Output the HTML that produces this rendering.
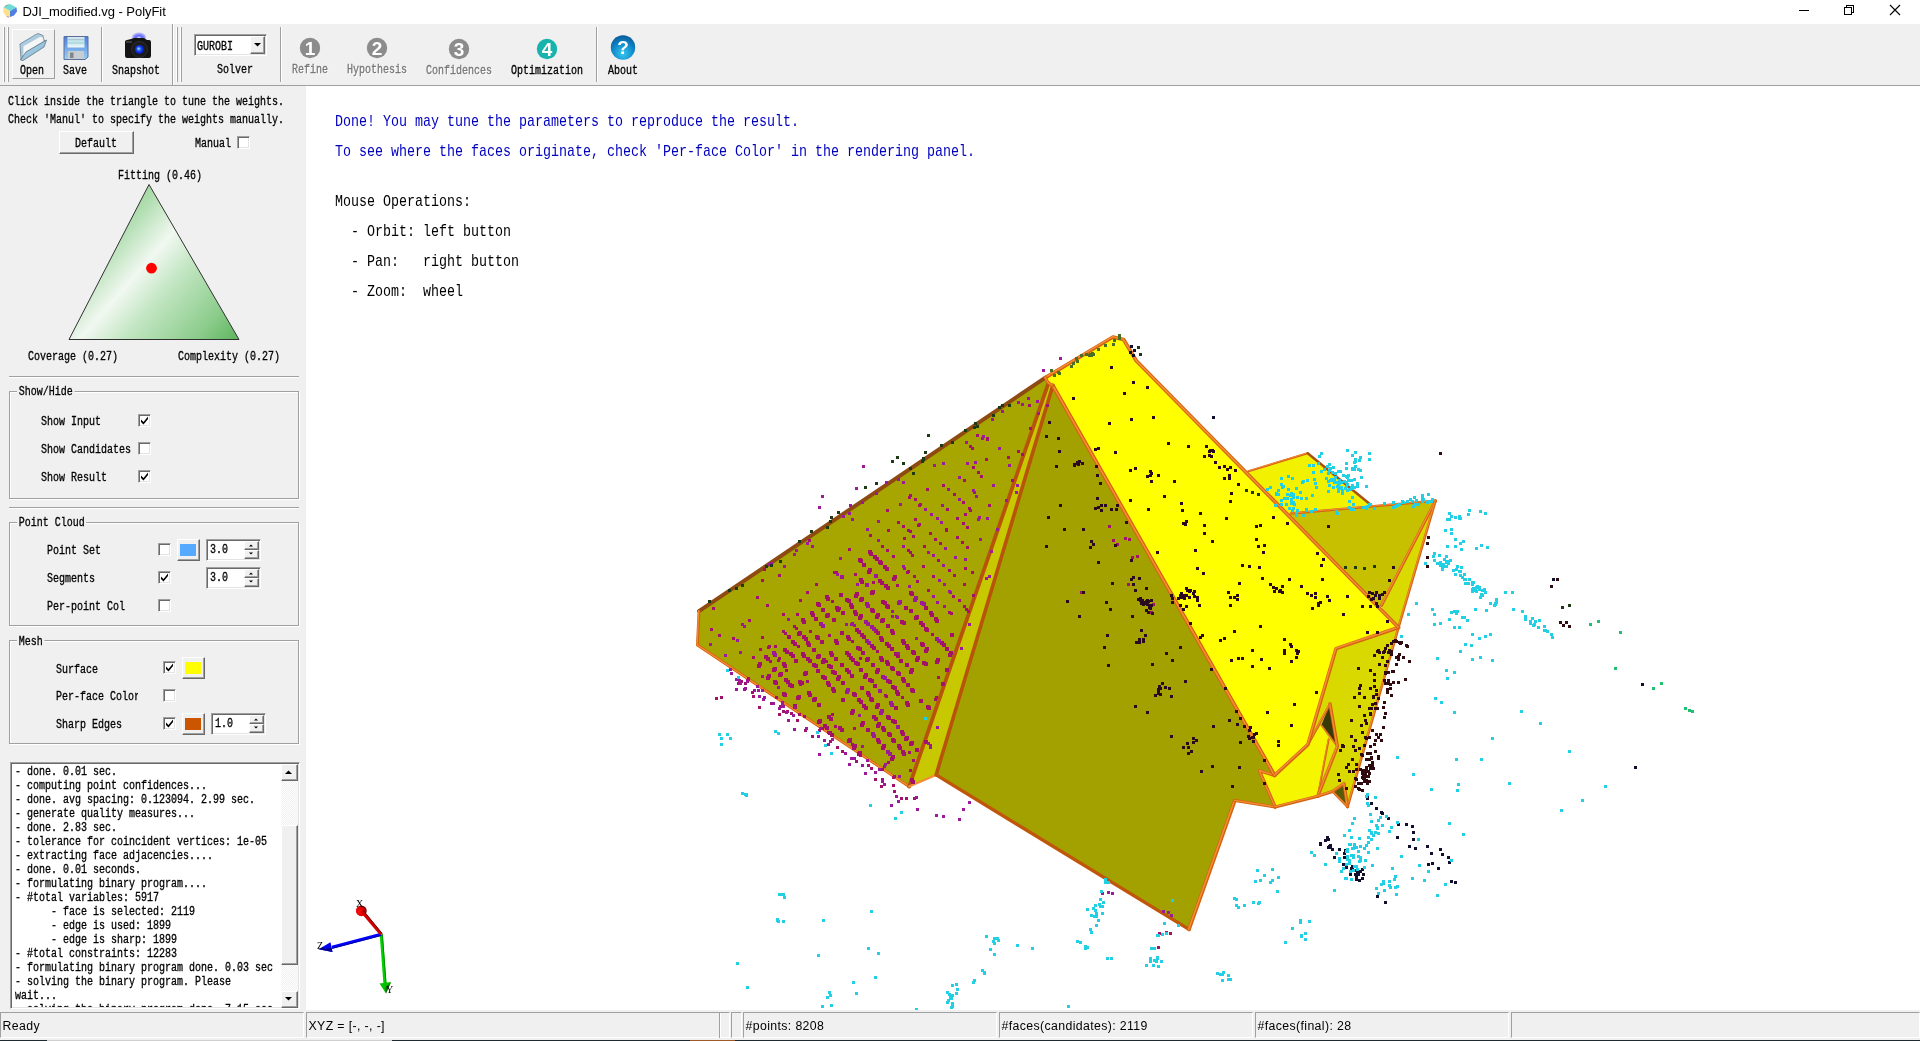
<!DOCTYPE html><html><head><meta charset="utf-8"><title>DJI_modified.vg - PolyFit</title><style>
html,body{margin:0;padding:0}
body{width:1920px;height:1041px;overflow:hidden;background:#f0f0f0;position:relative;font-family:"Liberation Mono",monospace;font-size:12px;color:#000}
#w{position:absolute;left:0;top:0;width:1920px;height:1041px;will-change:transform}
.a{position:absolute}
.t{position:absolute;white-space:pre;font:12px/14px "Liberation Mono",monospace;transform:scaleX(.8333);transform-origin:0 0;color:#000;-webkit-text-stroke:.3px}
.t16{position:absolute;white-space:pre;font:17px/20px "Liberation Mono",monospace;transform:scaleX(.7843);transform-origin:0 0;color:#000}
.dis{color:#787878;text-shadow:1.2px 1px 0 #fff}
.ui{position:absolute;white-space:pre;font:12px/16px "Liberation Sans",sans-serif;color:#000}
.raised{position:absolute;box-sizing:border-box;background:#f0f0f0;border:1px solid;border-color:#fff #696969 #696969 #fff;box-shadow:inset -1px -1px 0 #a0a0a0,inset 1px 1px 0 #f0f0f0}
.sunken{position:absolute;box-sizing:border-box;background:#fff;border:1px solid;border-color:#a0a0a0 #fff #fff #a0a0a0;box-shadow:inset 1px 1px 0 #696969,inset -1px -1px 0 #e3e3e3}
.grp{position:absolute;box-sizing:border-box;border:1px solid #a0a0a0;box-shadow:1px 1px 0 #fff,inset 1px 1px 0 #fff}
.grpt{background:#f0f0f0;padding:0 2px}
.hline{position:absolute;height:1px;background:#a0a0a0;box-shadow:0 1px 0 #fff}
.vsep{position:absolute;width:1px;background:#a0a0a0;box-shadow:1px 0 0 #fff}
.sbp{position:absolute;box-sizing:border-box;top:1012px;height:26px;border:1px solid;border-color:#a0a0a0 #fff #fff #a0a0a0}
</style></head><body><div id="w"><div class="a" style="left:0px;top:0px;width:1920px;height:24px;background:#fff;"></div><svg class="a" style="left:2px;top:3px" width="17" height="15" viewBox="0 0 17 15"><path d="M8 1 L14.5 4.5 L8 8 L1.5 4.5 Z" fill="#6fdcd8"/><path d="M1.5 4.5 L8 8 L8 14 L4 13 L1.2 9 Z" fill="#ffe08a"/><path d="M14.5 4.5 L8 8 L8 14 L12 12.5 L15 8.5 Z" fill="#4f7fe0"/><path d="M1.5 4.5 L4 2.3 L8 1 Z" fill="#4f8f5f"/><path d="M8 14 L4 13 L6 14.5 Z" fill="#d06060"/></svg><div class="ui" style="left:22.5px;top:3.5px;font-size:13px;line-height:16px;letter-spacing:-0.05px">DJI_modified.vg - PolyFit</div><svg class="a" style="left:1780px;top:0" width="140" height="24" viewBox="0 0 140 24" shape-rendering="crispEdges"><rect x="19" y="10" width="10" height="1" fill="#000"/><path d="M64.5 7.5 h7 v7 h-7 z M66.5 7.5 v-2 h7 v7 h-2" fill="none" stroke="#000" stroke-width="1"/><path d="M110 5 L120 15 M120 5 L110 15" fill="none" stroke="#000" stroke-width="1.1" shape-rendering="geometricPrecision"/></svg><div class="a" style="left:0px;top:85px;width:1920px;height:1px;background:#a0a0a0;"></div><div class="a" style="left:3px;top:27px;width:1px;height:55px;background:#fff;"></div><div class="a" style="left:4px;top:27px;width:1px;height:55px;background:#a0a0a0;"></div><div class="a" style="left:7px;top:27px;width:1px;height:55px;background:#fff;"></div><div class="a" style="left:8px;top:27px;width:1px;height:55px;background:#a0a0a0;"></div><div class="a" style="left:12px;top:29px;width:43px;height:50px;box-sizing:border-box;border:1px solid;border-color:#fff #a0a0a0 #a0a0a0 #fff"></div><svg class="a" style="left:18px;top:32px" width="30" height="31" viewBox="0 0 30 31"><defs><linearGradient id="fo" x1="0" y1="0" x2="1" y2="1"><stop offset="0" stop-color="#b8d8ea"/><stop offset="1" stop-color="#7fb4d4"/></linearGradient></defs><path d="M2 12 L17 3 L20 1.5 L25 3.5 L26 8 L27 9 L6 22 L3 28 Z" fill="#a9cde2" stroke="#6b7f8a" stroke-width="0.8"/><path d="M5 14 L22 4.5 L25 5 L25.5 9.5 L8 20 L5 26 Z" fill="#f4f6f8" stroke="#b0b8bf" stroke-width="0.6"/><path d="M8 20 L28.5 8 L26 15 L5 28.5 L2.5 28 Z" fill="url(#fo)" stroke="#5f7684" stroke-width="0.8"/></svg><div class="t" style="left:20px;top:64px;">Open</div><svg class="a" style="left:63px;top:35px" width="26" height="26" viewBox="0 0 26 26"><defs><linearGradient id="sv" x1="0" y1="0" x2="0" y2="1"><stop offset="0" stop-color="#4a7fe0"/><stop offset="1" stop-color="#9cd0f4"/></linearGradient><linearGradient id="sl" x1="0" y1="0" x2="0" y2="1"><stop offset="0" stop-color="#d8e4ee"/><stop offset=".5" stop-color="#bfe6ea"/><stop offset="1" stop-color="#f4f8fb"/></linearGradient></defs><path d="M1 1.5 H25 V22 L22 24.5 H1 Z" fill="url(#sv)" stroke="#5a6f9a" stroke-width="1"/><rect x="4.5" y="2" width="17" height="10.5" fill="url(#sl)"/><rect x="4.5" y="4" width="17" height="1.2" fill="#8fb0c8" opacity=".6"/><rect x="4.5" y="7.5" width="17" height="1.2" fill="#8fc8d0" opacity=".6"/><rect x="5" y="16" width="16" height="8" fill="#c8cdd2"/><rect x="7" y="17.5" width="3.5" height="5.5" fill="#7f858c"/></svg><div class="t" style="left:63px;top:64px;">Save</div><div class="vsep" style="left:101px;top:27px;height:55px"></div><svg class="a" style="left:123px;top:32px" width="30" height="29" viewBox="0 0 30 29"><defs><radialGradient id="fl" cx=".5" cy=".6" r=".6"><stop offset="0" stop-color="#fff"/><stop offset=".35" stop-color="#5a6aff"/><stop offset="1" stop-color="#2222ff" stop-opacity="0"/></radialGradient><radialGradient id="ln" cx=".45" cy=".45" r=".6"><stop offset="0" stop-color="#4aa0ff"/><stop offset=".6" stop-color="#1030e0"/><stop offset="1" stop-color="#0a1080"/></radialGradient></defs><ellipse cx="16" cy="5" rx="7" ry="5" fill="url(#fl)"/><path d="M2 9.5 Q2 8 4 8 L8 7 L11 6 H21 L24 8 H26 Q28 8 28 10 V24 Q28 26 26 26 H4 Q2 26 2 24 Z" fill="#141414"/><path d="M3 9 H9 V11 H3 Z" fill="#3a3a3a"/><circle cx="16.5" cy="17.5" r="8" fill="#1c1c1c" stroke="#333" stroke-width="0.8"/><circle cx="16.5" cy="17.5" r="4.6" fill="url(#ln)"/><circle cx="15.6" cy="16.6" r="1.2" fill="#7fd0ff"/></svg><div class="t" style="left:112px;top:64px;">Snapshot</div><div class="a" style="left:172px;top:24px;width:1px;height:61px;background:#a0a0a0;"></div><div class="a" style="left:173px;top:24px;width:1px;height:61px;background:#fff;"></div><div class="a" style="left:176px;top:27px;width:1px;height:55px;background:#fff;"></div><div class="a" style="left:177px;top:27px;width:1px;height:55px;background:#a0a0a0;"></div><div class="a" style="left:180px;top:27px;width:1px;height:55px;background:#fff;"></div><div class="a" style="left:181px;top:27px;width:1px;height:55px;background:#a0a0a0;"></div><div class="sunken" style="left:194px;top:34px;width:73px;height:22px;"></div><div class="t" style="left:197px;top:40px;">GUROBI</div><div class="raised" style="left:250px;top:36px;width:15px;height:18px;"></div><svg class="a" style="left:250px;top:36px" width="15" height="18" viewBox="0 0 15 18"><path d="M4 7 L11 7 L7.5 10.5 Z" fill="#000"/></svg><div class="t" style="left:217px;top:63px;">Solver</div><div class="vsep" style="left:280px;top:27px;height:55px"></div><svg class="a" style="left:297px;top:34.5px" width="26" height="26" viewBox="-13 -13 26 26"><circle cx="0" cy="0" r="10.2" fill="#8c8c8c"/><text x="0" y="6.8" text-anchor="middle" font-family="Liberation Sans, sans-serif" font-weight="bold" font-size="19" fill="#fff">1</text></svg><div class="t dis" style="left:291.5px;top:63px;">Refine</div><svg class="a" style="left:364px;top:34.5px" width="26" height="26" viewBox="-13 -13 26 26"><circle cx="0" cy="0" r="10.2" fill="#8c8c8c"/><text x="0" y="6.8" text-anchor="middle" font-family="Liberation Sans, sans-serif" font-weight="bold" font-size="19" fill="#fff">2</text></svg><div class="t dis" style="left:346.5px;top:63px;">Hypothesis</div><svg class="a" style="left:445.5px;top:35.5px" width="26" height="26" viewBox="-13 -13 26 26"><circle cx="0" cy="0" r="10.2" fill="#8c8c8c"/><text x="0" y="6.8" text-anchor="middle" font-family="Liberation Sans, sans-serif" font-weight="bold" font-size="19" fill="#fff">3</text></svg><div class="t dis" style="left:425.5px;top:64px;">Confidences</div><svg class="a" style="left:534px;top:35.5px" width="26" height="26" viewBox="-13 -13 26 26"><circle cx="0" cy="0" r="10.2" fill="#16b4ac"/><text x="0" y="6.8" text-anchor="middle" font-family="Liberation Sans, sans-serif" font-weight="bold" font-size="19" fill="#fff">4</text></svg><div class="t" style="left:511px;top:64px;">Optimization</div><div class="vsep" style="left:596px;top:27px;height:55px"></div><svg class="a" style="left:609px;top:33px" width="28" height="28" viewBox="-14 -14 28 28"><defs><radialGradient id="ab" cx=".5" cy=".75" r=".75"><stop offset="0" stop-color="#35c8f0"/><stop offset=".6" stop-color="#0f86c8"/><stop offset="1" stop-color="#0a5a98"/></radialGradient></defs><circle cx="0" cy="0.5" r="12.2" fill="url(#ab)"/><text x="0" y="6.5" text-anchor="middle" font-family="Liberation Sans, sans-serif" font-weight="bold" font-size="19" fill="#fff">?</text></svg><div class="t" style="left:608px;top:64px;">About</div><div class="t" style="left:8px;top:95px;">Click inside the triangle to tune the weights.</div><div class="t" style="left:8px;top:113px;">Check &#x27;Manul&#x27; to specify the weights manually.</div><div class="raised" style="left:59px;top:131px;width:75px;height:23px;"></div><div class="t" style="left:75px;top:137px;">Default</div><div class="t" style="left:195px;top:137px;">Manual</div><div class="sunken" style="left:237px;top:136px;width:13px;height:13px;"></div><div class="t" style="left:118px;top:169px;">Fitting (0.46)</div><svg class="a" style="left:60px;top:180px" width="190" height="166" viewBox="60 180 190 166"><defs><linearGradient id="tg" gradientUnits="userSpaceOnUse" x1="95" y1="225" x2="240" y2="352"><stop offset="0" stop-color="#8fd08f"/><stop offset=".14" stop-color="#b4dfb4"/><stop offset=".33" stop-color="#f1f8f1"/><stop offset=".50" stop-color="#c3e6c3"/><stop offset=".78" stop-color="#8ccc8c"/><stop offset="1" stop-color="#4fae4f"/></linearGradient></defs><path d="M149 184.5 L239 339.5 L69 339.5 Z" fill="url(#tg)" stroke="#303030" stroke-width="1"/><circle cx="151.5" cy="268.2" r="5.4" fill="#ff0000"/></svg><div class="t" style="left:28px;top:350px;">Coverage (0.27)</div><div class="t" style="left:178px;top:350px;">Complexity (0.27)</div><div class="hline" style="left:9px;top:376px;width:290px"></div><div class="grp" style="left:9px;top:391px;width:290px;height:108px"></div><div class="t grpt" style="left:17px;top:385px;">Show/Hide</div><div class="t" style="left:41px;top:414.5px;">Show Input</div><div class="sunken" style="left:138px;top:414px;width:13px;height:13px;"></div><svg class="a" style="left:138px;top:414px" width="13" height="13" viewBox="0 0 13 13"><path d="M3 5.5 L3 8 L5.5 10.5 L10 5 L10 2.5 L5.5 8 Z" fill="#000"/></svg><div class="t" style="left:41px;top:442.5px;">Show Candidates</div><div class="sunken" style="left:138px;top:442px;width:13px;height:13px;"></div><div class="t" style="left:41px;top:470.5px;">Show Result</div><div class="sunken" style="left:138px;top:470px;width:13px;height:13px;"></div><svg class="a" style="left:138px;top:470px" width="13" height="13" viewBox="0 0 13 13"><path d="M3 5.5 L3 8 L5.5 10.5 L10 5 L10 2.5 L5.5 8 Z" fill="#000"/></svg><div class="hline" style="left:9px;top:507px;width:290px"></div><div class="grp" style="left:9px;top:522px;width:290px;height:104px"></div><div class="t grpt" style="left:17px;top:516px;">Point Cloud</div><div class="t" style="left:46.5px;top:544px;">Point Set</div><div class="sunken" style="left:158px;top:543px;width:13px;height:13px;"></div><div class="raised" style="left:177px;top:539px;width:23px;height:22px;"></div><div class="a" style="left:180px;top:544px;width:16px;height:12px;background:#55aaff;"></div><div class="sunken" style="left:206px;top:539px;width:55px;height:22px;"></div><div class="t" style="left:210px;top:543px;">3.0</div><div class="raised" style="left:244px;top:541px;width:15px;height:9px;box-shadow:inset -1px -1px 0 #a0a0a0"></div><div class="raised" style="left:244px;top:550px;width:15px;height:9px;box-shadow:inset -1px -1px 0 #a0a0a0"></div><svg class="a" style="left:244px;top:541px" width="15" height="18" viewBox="0 0 15 18"><path d="M5 5.5 L9 5.5 L7 3.5 Z M5 11.5 L9 11.5 L7 13.5 Z" fill="#000"/></svg><div class="t" style="left:46.5px;top:572px;">Segments</div><div class="sunken" style="left:158px;top:571px;width:13px;height:13px;"></div><svg class="a" style="left:158px;top:571px" width="13" height="13" viewBox="0 0 13 13"><path d="M3 5.5 L3 8 L5.5 10.5 L10 5 L10 2.5 L5.5 8 Z" fill="#000"/></svg><div class="sunken" style="left:206px;top:567px;width:55px;height:22px;"></div><div class="t" style="left:210px;top:571px;">3.0</div><div class="raised" style="left:244px;top:569px;width:15px;height:9px;box-shadow:inset -1px -1px 0 #a0a0a0"></div><div class="raised" style="left:244px;top:578px;width:15px;height:9px;box-shadow:inset -1px -1px 0 #a0a0a0"></div><svg class="a" style="left:244px;top:569px" width="15" height="18" viewBox="0 0 15 18"><path d="M5 5.5 L9 5.5 L7 3.5 Z M5 11.5 L9 11.5 L7 13.5 Z" fill="#000"/></svg><div class="t" style="left:46.5px;top:600px;">Per-point Col</div><div class="sunken" style="left:158px;top:599px;width:13px;height:13px;"></div><div class="grp" style="left:9px;top:640px;width:290px;height:104px"></div><div class="t grpt" style="left:17px;top:634.5px;">Mesh</div><div class="t" style="left:55.5px;top:662.5px;">Surface</div><div class="sunken" style="left:163px;top:661px;width:13px;height:13px;"></div><svg class="a" style="left:163px;top:661px" width="13" height="13" viewBox="0 0 13 13"><path d="M3 5.5 L3 8 L5.5 10.5 L10 5 L10 2.5 L5.5 8 Z" fill="#000"/></svg><div class="raised" style="left:182px;top:657px;width:23px;height:22px;"></div><div class="a" style="left:185px;top:662px;width:16px;height:12px;background:#ffff00;"></div><div class="a" style="left:55.5px;top:690px;width:82px;height:14px;overflow:hidden"><div class="t" style="left:0;top:0">Per-face Color</div></div><div class="sunken" style="left:163px;top:689px;width:13px;height:13px;"></div><div class="t" style="left:55.5px;top:718px;">Sharp Edges</div><div class="sunken" style="left:163px;top:717px;width:13px;height:13px;"></div><svg class="a" style="left:163px;top:717px" width="13" height="13" viewBox="0 0 13 13"><path d="M3 5.5 L3 8 L5.5 10.5 L10 5 L10 2.5 L5.5 8 Z" fill="#000"/></svg><div class="raised" style="left:182px;top:713px;width:23px;height:22px;"></div><div class="a" style="left:185px;top:718px;width:16px;height:12px;background:#cc5500;"></div><div class="sunken" style="left:211px;top:713px;width:55px;height:22px;"></div><div class="t" style="left:215px;top:717px;">1.0</div><div class="raised" style="left:249px;top:715px;width:15px;height:9px;box-shadow:inset -1px -1px 0 #a0a0a0"></div><div class="raised" style="left:249px;top:724px;width:15px;height:9px;box-shadow:inset -1px -1px 0 #a0a0a0"></div><svg class="a" style="left:249px;top:715px" width="15" height="18" viewBox="0 0 15 18"><path d="M5 5.5 L9 5.5 L7 3.5 Z M5 11.5 L9 11.5 L7 13.5 Z" fill="#000"/></svg><div class="sunken" style="left:10px;top:762px;width:290px;height:247px;"></div><div class="a" style="left:12px;top:764px;width:268px;height:243px;overflow:hidden"><div class="t" style="left:2.5px;top:1.2px">- done. 0.01 sec.</div><div class="t" style="left:2.5px;top:15.2px">- computing point confidences...</div><div class="t" style="left:2.5px;top:29.2px">- done. avg spacing: 0.123094. 2.99 sec.</div><div class="t" style="left:2.5px;top:43.2px">- generate quality measures...</div><div class="t" style="left:2.5px;top:57.2px">- done. 2.83 sec.</div><div class="t" style="left:2.5px;top:71.2px">- tolerance for coincident vertices: 1e-05</div><div class="t" style="left:2.5px;top:85.2px">- extracting face adjacencies....</div><div class="t" style="left:2.5px;top:99.2px">- done. 0.01 seconds.</div><div class="t" style="left:2.5px;top:113.2px">- formulating binary program....</div><div class="t" style="left:2.5px;top:127.2px">- #total variables: 5917</div><div class="t" style="left:2.5px;top:141.2px">      - face is selected: 2119</div><div class="t" style="left:2.5px;top:155.2px">      - edge is used: 1899</div><div class="t" style="left:2.5px;top:169.2px">      - edge is sharp: 1899</div><div class="t" style="left:2.5px;top:183.2px">- #total constraints: 12283</div><div class="t" style="left:2.5px;top:197.2px">- formulating binary program done. 0.03 sec</div><div class="t" style="left:2.5px;top:211.2px">- solving the binary program. Please</div><div class="t" style="left:2.5px;top:225.2px">wait...</div><div class="t" style="left:2.5px;top:239.2px">- solving the binary program done. 7.15 sec</div></div><div class="a" style="left:281px;top:764px;width:17px;height:243px;background:#f8f8f8;background-image:conic-gradient(#fff 25%,#f0f0f0 0 50%,#fff 0 75%,#f0f0f0 0);background-size:2px 2px"></div><div class="raised" style="left:281px;top:764px;width:17px;height:17px;"></div><svg class="a" style="left:281px;top:764px" width="17" height="17" viewBox="0 0 17 17"><path d="M4 10 L11 10 L7.5 6.5 Z" fill="#000"/></svg><div class="raised" style="left:281px;top:825px;width:17px;height:140px;"></div><div class="raised" style="left:281px;top:991px;width:17px;height:17px;"></div><svg class="a" style="left:281px;top:991px" width="17" height="17" viewBox="0 0 17 17"><path d="M4 6 L11 6 L7.5 9.5 Z" fill="#000"/></svg><div class="a" style="left:306px;top:86px;width:1614px;height:924px;background:#fff;overflow:hidden"><svg class="a" style="left:0;top:0" width="1614" height="924" viewBox="306 86 1614 924"><defs><linearGradient id="eg" x1="0" y1="0" x2="1" y2="0"><stop offset="0" stop-color="#f08a3a"/><stop offset="1" stop-color="#b04a00"/></linearGradient></defs><polygon points="1240,475 1307.7,453.2 1371.0,505.0 1290.8,513.5 1280,520" fill="#f2f200"/><polygon points="1280,515 1435.5,500.8 1381.6,605.4 1370,610" fill="#c6c000"/><polygon points="1435.5,500.8 1398.5,627.5 1385,620 1381.6,605.4" fill="#dada00"/><polygon points="1045.4,377.6 699.0,611.2 697.4,645.0 909.1,786.6 1048.4,383.2" fill="#a7a500"/><polygon points="1048.4,383.2 909.1,786.6 936.1,774.9 1052.8,385.5" fill="#c8c800"/><polygon points="1052.8,385.5 936.1,774.9 1189.0,929.4 1234.8,800.6 1275.2,807.0 1259.5,770.8 1274.6,775.4" fill="#a3a100"/><polygon points="1336.1,648.6 1398.5,627.5 1347.6,806.8 1344.0,783.6 1332.5,791.5 1317.8,796.2 1337.4,746.5 1330.0,704.0 1307.9,744.6" fill="#d9d900"/><polygon points="1259.5,770.8 1274.6,775.4 1307.9,744.6 1321.3,725.0 1328.7,739.2 1317.8,796.2 1275.2,807.0" fill="#f6f600"/><polygon points="1321.3,725.0 1328.7,739.2 1317.8,796.2 1337.4,746.5" fill="#e4e400"/><polygon points="1307.9,744.6 1330.0,704.0 1321.3,725.0" fill="#d9d900"/><polygon points="1330.0,704.0 1321.3,725.0 1337.4,746.5" fill="#3a3a08"/><polygon points="1332.5,791.5 1344.0,783.6 1347.6,806.8" fill="#5a5a08"/><polygon points="1045.4,377.6 1113.0,337.0 1123.6,339.5 1136.3,360.7 1398.5,627.5 1336.1,648.6 1307.9,744.6 1274.6,775.4 1052.8,385.5" fill="#ffff00"/><polyline points="1248.5,471.2 1307.7,453.2" fill="none" stroke="#d2640f" stroke-width="2.2" stroke-linejoin="round" stroke-linecap="round"/><polyline points="1248.5,471.2 1307.7,453.2" fill="none" stroke="#f58c34" stroke-width="0.92" stroke-linejoin="round" stroke-linecap="round" transform="translate(-0.3,-0.3)"/><polyline points="1307.7,453.2 1371.0,505.0" fill="none" stroke="#a85010" stroke-width="2.4" stroke-linejoin="round" stroke-linecap="round"/><polyline points="1290.8,513.5 1435.5,500.8" fill="none" stroke="#d2640f" stroke-width="2.4" stroke-linejoin="round" stroke-linecap="round"/><polyline points="1290.8,513.5 1435.5,500.8" fill="none" stroke="#f58c34" stroke-width="1.01" stroke-linejoin="round" stroke-linecap="round" transform="translate(-0.3,-0.3)"/><polyline points="1435.5,500.8 1381.6,605.4" fill="none" stroke="#d2640f" stroke-width="3.0" stroke-linejoin="round" stroke-linecap="round"/><polyline points="1435.5,500.8 1381.6,605.4" fill="none" stroke="#f58c34" stroke-width="1.26" stroke-linejoin="round" stroke-linecap="round" transform="translate(-0.3,-0.3)"/><polyline points="1435.5,500.8 1398.5,627.5 1347.6,806.8" fill="none" stroke="#d2640f" stroke-width="2.6" stroke-linejoin="round" stroke-linecap="round"/><polyline points="1435.5,500.8 1398.5,627.5 1347.6,806.8" fill="none" stroke="#f58c34" stroke-width="1.09" stroke-linejoin="round" stroke-linecap="round" transform="translate(-0.3,-0.3)"/><polyline points="699.0,611.2 1045.4,377.6" fill="none" stroke="#8f4a12" stroke-width="4.0" stroke-linejoin="round" stroke-linecap="round"/><polyline points="699.0,611.2 697.4,645.0 909.1,786.6" fill="none" stroke="#d2640f" stroke-width="2.8" stroke-linejoin="round" stroke-linecap="round"/><polyline points="699.0,611.2 697.4,645.0 909.1,786.6" fill="none" stroke="#f58c34" stroke-width="1.18" stroke-linejoin="round" stroke-linecap="round" transform="translate(-0.3,-0.3)"/><polyline points="909.1,786.6 1048.4,383.2" fill="none" stroke="#b8540a" stroke-width="3.8" stroke-linejoin="round" stroke-linecap="round"/><polyline points="936.1,774.9 1052.8,385.5" fill="none" stroke="#b8540a" stroke-width="3.6" stroke-linejoin="round" stroke-linecap="round"/><polyline points="909.1,786.6 936.1,774.9" fill="none" stroke="#f0903a" stroke-width="2.2" stroke-linejoin="round" stroke-linecap="round"/><polyline points="909.1,786.6 936.1,774.9" fill="none" stroke="#f58c34" stroke-width="0.92" stroke-linejoin="round" stroke-linecap="round" transform="translate(-0.3,-0.3)"/><polyline points="936.1,774.9 1189.0,929.4" fill="none" stroke="#c0560a" stroke-width="3.4" stroke-linejoin="round" stroke-linecap="round"/><polyline points="1189.0,929.4 1234.8,800.6" fill="none" stroke="#d2640f" stroke-width="3.7" stroke-linejoin="round" stroke-linecap="round"/><polyline points="1189.0,929.4 1234.8,800.6" fill="none" stroke="#f58c34" stroke-width="1.55" stroke-linejoin="round" stroke-linecap="round" transform="translate(-0.3,-0.3)"/><polyline points="1234.8,800.6 1275.2,807.0" fill="none" stroke="#d2640f" stroke-width="3.0" stroke-linejoin="round" stroke-linecap="round"/><polyline points="1234.8,800.6 1275.2,807.0" fill="none" stroke="#f58c34" stroke-width="1.26" stroke-linejoin="round" stroke-linecap="round" transform="translate(-0.3,-0.3)"/><polyline points="1275.2,807.0 1259.5,770.8 1274.6,775.4" fill="none" stroke="#d2640f" stroke-width="3.2" stroke-linejoin="round" stroke-linecap="round"/><polyline points="1275.2,807.0 1259.5,770.8 1274.6,775.4" fill="none" stroke="#f58c34" stroke-width="1.34" stroke-linejoin="round" stroke-linecap="round" transform="translate(-0.3,-0.3)"/><polyline points="1307.9,744.6 1330.0,704.0" fill="none" stroke="#d2640f" stroke-width="2.6" stroke-linejoin="round" stroke-linecap="round"/><polyline points="1307.9,744.6 1330.0,704.0" fill="none" stroke="#f58c34" stroke-width="1.09" stroke-linejoin="round" stroke-linecap="round" transform="translate(-0.3,-0.3)"/><polyline points="1321.3,725.0 1337.4,746.5" fill="none" stroke="#d2640f" stroke-width="1.8" stroke-linejoin="round" stroke-linecap="round"/><polyline points="1321.3,725.0 1337.4,746.5" fill="none" stroke="#f58c34" stroke-width="0.76" stroke-linejoin="round" stroke-linecap="round" transform="translate(-0.3,-0.3)"/><polyline points="1328.7,739.2 1317.8,796.2" fill="none" stroke="#d2640f" stroke-width="2.0" stroke-linejoin="round" stroke-linecap="round"/><polyline points="1328.7,739.2 1317.8,796.2" fill="none" stroke="#f58c34" stroke-width="0.84" stroke-linejoin="round" stroke-linecap="round" transform="translate(-0.3,-0.3)"/><polyline points="1330.0,704.0 1337.4,746.5 1317.8,796.2" fill="none" stroke="#d2640f" stroke-width="3.4" stroke-linejoin="round" stroke-linecap="round"/><polyline points="1330.0,704.0 1337.4,746.5 1317.8,796.2" fill="none" stroke="#f58c34" stroke-width="1.43" stroke-linejoin="round" stroke-linecap="round" transform="translate(-0.3,-0.3)"/><polyline points="1275.2,807.0 1317.8,796.2 1332.5,791.5 1344.0,783.6 1347.6,806.8" fill="none" stroke="#d2640f" stroke-width="3.2" stroke-linejoin="round" stroke-linecap="round"/><polyline points="1275.2,807.0 1317.8,796.2 1332.5,791.5 1344.0,783.6 1347.6,806.8" fill="none" stroke="#f58c34" stroke-width="1.34" stroke-linejoin="round" stroke-linecap="round" transform="translate(-0.3,-0.3)"/><polyline points="1332.5,791.5 1347.6,806.8" fill="none" stroke="#d2640f" stroke-width="2.4" stroke-linejoin="round" stroke-linecap="round"/><polyline points="1332.5,791.5 1347.6,806.8" fill="none" stroke="#f58c34" stroke-width="1.01" stroke-linejoin="round" stroke-linecap="round" transform="translate(-0.3,-0.3)"/><polyline points="1052.8,385.5 1274.6,775.4" fill="none" stroke="#d2640f" stroke-width="3.9" stroke-linejoin="round" stroke-linecap="round"/><polyline points="1052.8,385.5 1274.6,775.4" fill="none" stroke="#f58c34" stroke-width="1.64" stroke-linejoin="round" stroke-linecap="round" transform="translate(-0.3,-0.3)"/><polyline points="1398.5,627.5 1336.1,648.6 1307.9,744.6 1274.6,775.4" fill="none" stroke="#d2640f" stroke-width="3.5" stroke-linejoin="round" stroke-linecap="round"/><polyline points="1398.5,627.5 1336.1,648.6 1307.9,744.6 1274.6,775.4" fill="none" stroke="#f58c34" stroke-width="1.47" stroke-linejoin="round" stroke-linecap="round" transform="translate(-0.3,-0.3)"/><polyline points="1045.4,377.6 1113.0,337.0 1123.6,339.5 1136.3,360.7 1398.5,627.5" fill="none" stroke="#d2640f" stroke-width="3.7" stroke-linejoin="round" stroke-linecap="round"/><polyline points="1045.4,377.6 1113.0,337.0 1123.6,339.5 1136.3,360.7 1398.5,627.5" fill="none" stroke="#f58c34" stroke-width="1.55" stroke-linejoin="round" stroke-linecap="round" transform="translate(-0.3,-0.3)"/><polyline points="1045.4,377.6 1048.4,383.2 1052.8,385.5" fill="none" stroke="#d2640f" stroke-width="3.0" stroke-linejoin="round" stroke-linecap="round"/><polyline points="1045.4,377.6 1048.4,383.2 1052.8,385.5" fill="none" stroke="#f58c34" stroke-width="1.26" stroke-linejoin="round" stroke-linecap="round" transform="translate(-0.3,-0.3)"/></svg><svg class="a" style="left:0;top:0" width="1614" height="924" viewBox="306 86 1614 924" shape-rendering="crispEdges"><path fill="#a3126a" d="M752 656h3v3h-3zM758 662h4v4h-4zM757 664h4v4h-4zM767 674h4v4h-4zM766 676h4v4h-4zM773 680h4v4h-4zM774 681h4v4h-4zM782 692h4v4h-4zM783 693h4v4h-4zM793 704h4v4h-4zM759 648h3v3h-3zM764 655h4v4h-4zM766 657h4v4h-4zM769 660h3v3h-3zM773 667h4v4h-4zM772 668h4v4h-4zM779 672h4v4h-4zM778 673h4v4h-4zM784 678h4v4h-4zM786 680h4v4h-4zM788 683h4v4h-4zM790 684h4v4h-4zM797 695h4v4h-4zM796 696h4v4h-4zM818 719h4v4h-4zM817 720h4v4h-4zM823 724h4v4h-4zM825 726h4v4h-4zM828 731h4v4h-4zM830 733h4v4h-4zM768 645h3v3h-3zM767 646h3v3h-3zM778 657h3v3h-3zM777 659h3v3h-3zM782 662h4v4h-4zM783 664h4v4h-4zM798 680h4v4h-4zM800 681h4v4h-4zM807 691h4v4h-4zM808 693h4v4h-4zM813 697h4v4h-4zM812 698h4v4h-4zM817 703h4v4h-4zM827 715h4v4h-4zM829 717h4v4h-4zM838 726h4v4h-4zM840 728h4v4h-4zM848 738h4v4h-4zM847 739h4v4h-4zM853 744h4v4h-4zM852 746h4v4h-4zM858 751h4v4h-4zM857 752h4v4h-4zM783 648h4v4h-4zM785 650h4v4h-4zM789 652h4v4h-4zM791 654h4v4h-4zM794 659h4v4h-4zM804 671h4v4h-4zM803 672h4v4h-4zM893 775h3v3h-3zM892 776h3v3h-3zM782 630h3v3h-3zM784 632h3v3h-3zM787 635h4v4h-4zM791 640h4v4h-4zM793 642h4v4h-4zM797 645h3v3h-3zM801 652h4v4h-4zM802 654h4v4h-4zM806 657h4v4h-4zM808 659h4v4h-4zM812 663h4v4h-4zM814 664h4v4h-4zM816 669h4v4h-4zM821 675h4v4h-4zM823 676h4v4h-4zM826 681h4v4h-4zM827 683h4v4h-4zM831 687h4v4h-4zM832 689h4v4h-4zM841 698h4v4h-4zM851 709h4v4h-4zM850 711h4v4h-4zM861 721h4v4h-4zM860 723h4v4h-4zM866 728h4v4h-4zM876 738h4v4h-4zM877 740h4v4h-4zM882 744h4v4h-4zM881 746h4v4h-4zM891 755h4v4h-4zM890 757h4v4h-4zM910 778h4v4h-4zM911 780h4v4h-4zM782 613h3v3h-3zM793 625h3v3h-3zM795 627h3v3h-3zM798 631h4v4h-4zM797 632h4v4h-4zM802 635h4v4h-4zM804 637h4v4h-4zM806 641h4v4h-4zM807 643h4v4h-4zM812 648h4v4h-4zM817 654h4v4h-4zM816 655h4v4h-4zM822 658h4v4h-4zM821 660h4v4h-4zM827 664h4v4h-4zM829 665h4v4h-4zM831 670h4v4h-4zM833 671h4v4h-4zM837 675h4v4h-4zM836 677h4v4h-4zM841 681h4v4h-4zM852 692h4v4h-4zM853 693h4v4h-4zM857 698h4v4h-4zM859 700h4v4h-4zM862 704h4v4h-4zM864 706h4v4h-4zM872 715h4v4h-4zM874 717h4v4h-4zM877 722h4v4h-4zM876 724h4v4h-4zM881 726h4v4h-4zM882 728h4v4h-4zM887 732h4v4h-4zM888 733h4v4h-4zM891 738h4v4h-4zM892 739h4v4h-4zM897 744h4v4h-4zM898 746h4v4h-4zM901 750h4v4h-4zM902 752h4v4h-4zM796 613h3v3h-3zM801 618h4v4h-4zM802 620h4v4h-4zM809 630h3v3h-3zM815 635h4v4h-4zM816 636h4v4h-4zM820 640h4v4h-4zM829 651h4v4h-4zM830 653h4v4h-4zM834 657h4v4h-4zM840 663h4v4h-4zM845 668h4v4h-4zM847 670h4v4h-4zM850 674h4v4h-4zM860 686h4v4h-4zM866 691h4v4h-4zM867 693h4v4h-4zM869 697h4v4h-4zM870 698h4v4h-4zM876 703h4v4h-4zM875 705h4v4h-4zM886 715h4v4h-4zM887 716h4v4h-4zM891 719h4v4h-4zM893 720h4v4h-4zM900 730h4v4h-4zM901 732h4v4h-4zM905 736h4v4h-4zM904 737h4v4h-4zM910 741h4v4h-4zM909 742h4v4h-4zM915 748h4v4h-4zM799 599h3v3h-3zM810 611h4v4h-4zM811 613h4v4h-4zM814 617h4v4h-4zM828 634h3v3h-3zM834 639h4v4h-4zM835 641h4v4h-4zM845 651h4v4h-4zM847 653h4v4h-4zM849 656h4v4h-4zM851 658h4v4h-4zM854 661h4v4h-4zM856 662h4v4h-4zM859 668h4v4h-4zM864 673h4v4h-4zM863 675h4v4h-4zM868 678h4v4h-4zM870 679h4v4h-4zM873 684h4v4h-4zM884 694h3v3h-3zM885 695h3v3h-3zM894 706h4v4h-4zM924 740h4v4h-4zM806 591h3v3h-3zM816 602h4v4h-4zM817 603h4v4h-4zM821 608h4v4h-4zM826 613h4v4h-4zM825 614h4v4h-4zM832 618h4v4h-4zM840 631h4v4h-4zM846 635h4v4h-4zM847 637h4v4h-4zM851 640h3v3h-3zM856 646h4v4h-4zM858 647h4v4h-4zM861 651h4v4h-4zM866 657h4v4h-4zM865 658h4v4h-4zM871 663h4v4h-4zM876 668h4v4h-4zM875 670h4v4h-4zM886 679h4v4h-4zM888 680h4v4h-4zM891 685h4v4h-4zM893 686h4v4h-4zM895 690h4v4h-4zM896 692h4v4h-4zM901 696h3v3h-3zM905 701h4v4h-4zM906 703h4v4h-4zM815 583h3v3h-3zM825 595h4v4h-4zM826 597h4v4h-4zM831 600h3v3h-3zM835 606h4v4h-4zM836 608h4v4h-4zM841 611h4v4h-4zM855 628h4v4h-4zM857 630h4v4h-4zM860 633h4v4h-4zM862 635h4v4h-4zM870 644h4v4h-4zM872 646h4v4h-4zM876 650h3v3h-3zM879 656h4v4h-4zM880 658h4v4h-4zM885 660h4v4h-4zM886 662h4v4h-4zM890 666h4v4h-4zM891 667h4v4h-4zM896 671h4v4h-4zM897 672h4v4h-4zM901 677h4v4h-4zM902 679h4v4h-4zM906 683h4v4h-4zM910 688h4v4h-4zM911 689h4v4h-4zM919 699h4v4h-4zM926 705h4v4h-4zM927 706h4v4h-4zM839 593h4v4h-4zM845 598h4v4h-4zM847 599h4v4h-4zM849 603h4v4h-4zM850 605h4v4h-4zM853 610h4v4h-4zM854 612h4v4h-4zM859 614h4v4h-4zM858 616h4v4h-4zM874 629h4v4h-4zM876 631h4v4h-4zM879 636h4v4h-4zM880 638h4v4h-4zM885 642h4v4h-4zM887 644h4v4h-4zM890 647h4v4h-4zM894 652h4v4h-4zM896 654h4v4h-4zM899 659h4v4h-4zM905 663h4v4h-4zM910 668h4v4h-4zM909 670h4v4h-4zM935 696h3v3h-3zM934 698h3v3h-3zM835 571h3v3h-3zM855 592h4v4h-4zM854 594h4v4h-4zM860 597h4v4h-4zM859 598h4v4h-4zM870 608h4v4h-4zM871 609h4v4h-4zM876 613h4v4h-4zM875 615h4v4h-4zM881 618h4v4h-4zM880 619h4v4h-4zM886 624h4v4h-4zM890 629h4v4h-4zM891 631h4v4h-4zM901 639h4v4h-4zM902 641h4v4h-4zM905 644h4v4h-4zM906 646h4v4h-4zM911 650h4v4h-4zM912 651h4v4h-4zM916 656h4v4h-4zM915 658h4v4h-4zM922 661h4v4h-4zM924 662h4v4h-4zM937 676h3v3h-3zM941 682h4v4h-4zM854 573h3v3h-3zM859 578h4v4h-4zM860 580h4v4h-4zM871 590h4v4h-4zM870 591h4v4h-4zM881 600h4v4h-4zM883 601h4v4h-4zM885 604h4v4h-4zM886 605h4v4h-4zM900 620h4v4h-4zM902 621h4v4h-4zM920 642h4v4h-4zM921 643h4v4h-4zM925 647h4v4h-4zM924 649h4v4h-4zM936 658h4v4h-4zM935 660h4v4h-4zM945 668h4v4h-4zM848 548h3v3h-3zM858 558h4v4h-4zM859 559h4v4h-4zM862 563h4v4h-4zM868 568h4v4h-4zM867 570h4v4h-4zM878 579h4v4h-4zM880 581h4v4h-4zM884 584h4v4h-4zM886 586h4v4h-4zM904 606h4v4h-4zM909 609h4v4h-4zM915 615h4v4h-4zM914 616h4v4h-4zM919 621h4v4h-4zM921 623h4v4h-4zM924 627h4v4h-4zM925 628h4v4h-4zM940 641h4v4h-4zM942 643h4v4h-4zM945 647h4v4h-4zM949 651h4v4h-4zM948 653h4v4h-4zM868 550h4v4h-4zM869 552h4v4h-4zM873 555h4v4h-4zM875 557h4v4h-4zM878 560h4v4h-4zM879 561h4v4h-4zM883 565h4v4h-4zM885 567h4v4h-4zM893 575h4v4h-4zM892 577h4v4h-4zM909 591h4v4h-4zM910 592h4v4h-4zM924 606h4v4h-4zM929 611h4v4h-4zM930 613h4v4h-4zM934 617h4v4h-4zM935 619h4v4h-4zM950 633h4v4h-4zM881 545h3v3h-3zM886 549h3v3h-3zM892 555h3v3h-3zM907 570h3v3h-3zM906 571h3v3h-3zM913 575h3v3h-3zM916 580h3v3h-3zM927 589h3v3h-3zM948 611h3v3h-3zM950 612h3v3h-3zM887 529h3v3h-3zM907 549h3v3h-3zM909 551h3v3h-3zM911 554h3v3h-3zM922 565h3v3h-3zM932 575h3v3h-3zM952 595h3v3h-3zM958 599h3v3h-3zM963 605h3v3h-3zM967 610h3v3h-3zM886 509h3v3h-3zM897 521h3v3h-3zM902 525h3v3h-3zM907 529h3v3h-3zM909 530h3v3h-3zM912 535h3v3h-3zM923 545h3v3h-3zM937 559h3v3h-3zM948 569h3v3h-3zM953 574h3v3h-3zM963 583h3v3h-3zM972 594h3v3h-3zM914 518h3v3h-3zM918 523h3v3h-3zM917 524h3v3h-3zM929 532h3v3h-3zM934 538h3v3h-3zM939 542h3v3h-3zM964 567h3v3h-3zM971 571h3v3h-3zM909 494h3v3h-3zM908 496h3v3h-3zM914 498h3v3h-3zM919 503h3v3h-3zM918 504h3v3h-3zM945 528h3v3h-3zM956 536h3v3h-3zM961 541h3v3h-3zM966 546h3v3h-3zM926 488h3v3h-3zM946 508h3v3h-3zM956 517h3v3h-3zM962 522h3v3h-3zM966 526h3v3h-3zM942 484h3v3h-3zM953 493h3v3h-3zM962 501h3v3h-3zM968 507h3v3h-3zM969 509h3v3h-3zM963 479h3v3h-3zM988 504h3v3h-3zM972 466h3v3h-3zM977 471h3v3h-3zM980 475h3v3h-3zM969 445h3v3h-3zM971 447h3v3h-3zM985 458h3v3h-3zM1011 479h3v3h-3zM986 438h3v3h-3zM1007 456h3v3h-3zM1029 427h3v3h-3zM1028 404h3v3h-3zM774 645h3v3h-3zM964 513h3v3h-3zM732 637h3v3h-3zM976 434h3v3h-3zM761 636h3v3h-3zM912 759h3v3h-3zM712 607h3v3h-3zM831 713h3v3h-3zM785 669h3v3h-3zM761 579h3v3h-3zM931 633h3v3h-3zM831 670h3v3h-3zM869 534h3v3h-3zM748 619h3v3h-3zM1017 450h3v3h-3zM872 581h3v3h-3zM965 608h3v3h-3zM763 568h3v3h-3zM986 437h3v3h-3zM908 751h3v3h-3zM756 596h3v3h-3zM896 584h3v3h-3zM833 571h3v3h-3zM710 628h3v3h-3zM903 537h3v3h-3zM887 761h3v3h-3zM945 529h3v3h-3zM799 683h3v3h-3zM1021 453h3v3h-3zM834 725h3v3h-3zM909 769h3v3h-3zM838 607h3v3h-3zM718 634h3v3h-3zM853 727h3v3h-3zM825 660h3v3h-3zM766 604h3v3h-3zM778 574h3v3h-3zM808 539h3v3h-3zM806 680h3v3h-3zM859 657h3v3h-3zM794 706h3v3h-3zM818 729h3v3h-3zM874 778h3v3h-3zM778 713h3v3h-3zM849 740h3v3h-3zM905 797h3v3h-3zM913 797h3v3h-3zM770 702h3v3h-3zM790 712h3v3h-3zM811 735h3v3h-3zM775 696h3v3h-3zM893 790h3v3h-3zM746 679h3v3h-3zM786 710h3v3h-3zM900 797h3v3h-3zM841 750h3v3h-3zM779 705h3v3h-3zM867 764h3v3h-3zM743 688h3v3h-3zM747 678h3v3h-3zM804 729h3v3h-3zM836 746h3v3h-3zM855 760h3v3h-3zM798 713h3v3h-3zM782 710h3v3h-3zM744 682h3v3h-3zM752 695h3v3h-3zM740 680h3v3h-3zM892 784h3v3h-3zM803 715h3v3h-3zM737 682h3v3h-3zM751 691h3v3h-3zM827 731h3v3h-3zM796 719h3v3h-3zM881 768h3v3h-3zM880 785h3v3h-3zM859 754h3v3h-3zM821 727h3v3h-3zM829 740h3v3h-3zM881 778h3v3h-3zM870 767h3v3h-3zM851 743h3v3h-3zM747 677h3v3h-3zM825 726h3v3h-3zM758 706h3v3h-3zM715 697h3v3h-3zM720 696h3v3h-3zM1108 525h3v3h-3zM1112 539h3v3h-3zM1116 543h3v3h-3zM1124 537h3v3h-3zM1128 538h3v3h-3zM1131 556h3v3h-3zM1136 555h3v3h-3zM1080 591h3v3h-3zM1127 583h3v3h-3zM1152 603h3v3h-3zM1150 611h3v3h-3zM1046 404h3v3h-3zM1158 932h3v3h-3zM1165 931h3v3h-3zM1169 932h3v3h-3zM1157 946h3v3h-3z"/><path fill="#9a1a9a" d="M777 686h3v3h-3zM772 651h4v4h-4zM773 653h4v4h-4zM884 763h3v3h-3zM883 765h3v3h-3zM871 732h4v4h-4zM872 734h4v4h-4zM886 750h4v4h-4zM888 752h4v4h-4zM787 618h3v3h-3zM846 688h4v4h-4zM845 690h4v4h-4zM880 709h4v4h-4zM879 711h4v4h-4zM896 725h4v4h-4zM819 622h4v4h-4zM821 624h4v4h-4zM878 689h4v4h-4zM889 701h4v4h-4zM890 703h4v4h-4zM881 675h4v4h-4zM883 676h4v4h-4zM851 622h3v3h-3zM850 623h3v3h-3zM865 639h4v4h-4zM867 641h4v4h-4zM864 620h4v4h-4zM866 622h4v4h-4zM870 625h4v4h-4zM872 627h4v4h-4zM840 575h4v4h-4zM865 602h4v4h-4zM866 604h4v4h-4zM839 557h3v3h-3zM865 583h4v4h-4zM891 610h3v3h-3zM895 615h3v3h-3zM896 616h3v3h-3zM915 637h3v3h-3zM874 574h4v4h-4zM898 600h4v4h-4zM897 601h4v4h-4zM935 637h4v4h-4zM937 639h4v4h-4zM914 596h4v4h-4zM913 598h4v4h-4zM920 601h4v4h-4zM922 602h4v4h-4zM866 528h3v3h-3zM877 539h3v3h-3zM902 565h3v3h-3zM903 567h3v3h-3zM932 595h3v3h-3zM943 605h3v3h-3zM877 520h3v3h-3zM902 545h3v3h-3zM938 579h3v3h-3zM943 583h3v3h-3zM948 590h3v3h-3zM949 591h3v3h-3zM927 551h3v3h-3zM932 554h3v3h-3zM942 564h3v3h-3zM899 503h3v3h-3zM944 547h3v3h-3zM954 556h3v3h-3zM924 508h3v3h-3zM930 513h3v3h-3zM936 517h3v3h-3zM940 521h3v3h-3zM941 504h3v3h-3zM947 488h3v3h-3zM958 498h3v3h-3zM978 516h3v3h-3zM977 518h3v3h-3zM942 462h3v3h-3zM958 476h3v3h-3zM972 489h3v3h-3zM973 491h3v3h-3zM966 462h3v3h-3zM992 484h3v3h-3zM982 435h3v3h-3zM981 437h3v3h-3zM998 447h3v3h-3zM761 675h3v3h-3zM897 652h3v3h-3zM1036 400h3v3h-3zM858 714h3v3h-3zM936 601h3v3h-3zM736 639h3v3h-3zM741 623h3v3h-3zM986 517h3v3h-3zM739 651h3v3h-3zM891 615h3v3h-3zM908 585h3v3h-3zM743 625h3v3h-3zM975 495h3v3h-3zM856 583h3v3h-3zM979 538h3v3h-3zM836 573h3v3h-3zM724 654h3v3h-3zM845 623h3v3h-3zM964 558h3v3h-3zM1008 464h3v3h-3zM933 464h3v3h-3zM853 624h3v3h-3zM709 643h3v3h-3zM861 745h3v3h-3zM974 461h3v3h-3zM770 562h3v3h-3zM842 515h3v3h-3zM1017 401h3v3h-3zM783 565h3v3h-3zM1021 403h3v3h-3zM848 512h3v3h-3zM965 441h3v3h-3zM768 563h3v3h-3zM902 481h3v3h-3zM1027 397h3v3h-3zM1001 410h3v3h-3zM851 518h3v3h-3zM806 542h3v3h-3zM849 504h3v3h-3zM875 492h3v3h-3zM885 481h3v3h-3zM793 553h3v3h-3zM991 418h3v3h-3zM897 478h3v3h-3zM861 501h3v3h-3zM811 545h3v3h-3zM795 549h3v3h-3zM862 465h3v3h-3zM821 495h3v3h-3zM818 506h3v3h-3zM855 487h3v3h-3zM1059 357h3v3h-3zM1042 369h3v3h-3zM781 701h3v3h-3zM823 739h3v3h-3zM772 702h3v3h-3zM878 768h3v3h-3zM864 772h3v3h-3zM738 679h3v3h-3zM881 780h3v3h-3zM861 764h3v3h-3zM831 738h3v3h-3zM819 727h3v3h-3zM761 689h3v3h-3zM844 752h3v3h-3zM739 682h3v3h-3zM817 735h3v3h-3zM818 753h3v3h-3zM874 771h3v3h-3zM787 719h3v3h-3zM895 795h3v3h-3zM753 689h3v3h-3zM898 775h3v3h-3zM758 695h3v3h-3zM762 698h3v3h-3zM883 783h3v3h-3zM746 680h3v3h-3zM785 711h3v3h-3zM848 763h3v3h-3zM866 759h3v3h-3zM805 727h3v3h-3zM793 706h3v3h-3zM850 757h3v3h-3zM782 705h3v3h-3zM730 672h3v3h-3zM792 714h3v3h-3zM735 678h3v3h-3zM793 728h3v3h-3zM729 668h3v3h-3zM781 704h3v3h-3zM744 687h3v3h-3zM827 743h3v3h-3zM756 685h3v3h-3zM735 688h3v3h-3zM763 696h3v3h-3zM853 757h3v3h-3zM757 689h3v3h-3zM778 707h3v3h-3zM942 815h3v3h-3zM935 814h3v3h-3zM962 808h3v3h-3zM890 804h3v3h-3zM915 796h3v3h-3zM968 801h3v3h-3zM916 808h3v3h-3zM958 818h3v3h-3zM897 800h3v3h-3zM1037 412h3v3h-3zM985 577h3v3h-3zM936 726h3v3h-3zM929 744h3v3h-3zM1005 499h3v3h-3zM960 647h3v3h-3zM990 550h3v3h-3zM988 575h3v3h-3zM929 746h3v3h-3zM927 742h3v3h-3zM1016 484h3v3h-3zM1015 491h3v3h-3zM968 623h3v3h-3zM996 528h3v3h-3zM1101 892h3v3h-3zM1107 891h3v3h-3zM1111 892h3v3h-3zM1162 910h3v3h-3zM1167 911h3v3h-3zM1170 914h3v3h-3z"/><path fill="#1e3a14" d="M940 444h3v3h-3zM964 429h3v3h-3zM912 472h3v3h-3zM837 511h3v3h-3zM922 457h3v3h-3zM826 526h3v3h-3zM922 458h3v3h-3zM992 414h3v3h-3zM974 422h3v3h-3zM830 516h3v3h-3zM921 460h3v3h-3zM735 587h3v3h-3zM976 425h3v3h-3zM829 520h3v3h-3zM741 584h3v3h-3zM1008 404h3v3h-3zM728 589h3v3h-3zM779 560h3v3h-3zM1001 404h3v3h-3zM770 564h3v3h-3zM798 540h3v3h-3zM951 441h3v3h-3zM708 600h3v3h-3zM810 530h3v3h-3zM765 565h3v3h-3zM973 426h3v3h-3zM891 460h3v3h-3zM896 456h3v3h-3zM902 462h3v3h-3zM909 467h3v3h-3zM927 434h3v3h-3zM924 451h3v3h-3zM864 486h3v3h-3zM875 482h3v3h-3zM998 406h3v3h-3zM1344 566h3v3h-3zM1354 566h3v3h-3zM1363 567h3v3h-3zM1373 565h3v3h-3zM1245 489h3v3h-3zM1251 491h3v3h-3zM1257 493h3v3h-3zM1561 606h3v3h-3zM1568 604h3v3h-3zM1137 346h3v3h-3zM1139 353h3v3h-3z"/><path fill="#4a6e22" d="M1092 353h3v3h-3zM1091 352h3v3h-3zM1070 365h3v3h-3zM1072 362h3v3h-3zM1118 334h3v3h-3zM1112 343h3v3h-3zM1090 354h3v3h-3zM1053 374h3v3h-3zM1088 354h3v3h-3zM1076 360h3v3h-3zM1058 372h3v3h-3zM1113 339h3v3h-3zM1118 337h3v3h-3zM1080 354h3v3h-3zM1104 344h3v3h-3zM1085 353h3v3h-3zM1075 357h3v3h-3zM1097 348h3v3h-3zM1089 353h3v3h-3zM1050 369h3v3h-3zM1057 371h3v3h-3zM1118 337h3v3h-3z"/><path fill="#2a0a1e" d="M1048 421h3v3h-3zM1212 725h3v3h-3zM1099 482h3v3h-3zM1165 652h3v3h-3zM1263 759h3v3h-3zM1239 717h3v3h-3zM1236 723h3v3h-3zM1045 545h3v3h-3zM1096 474h3v3h-3zM1184 680h3v3h-3zM1125 521h3v3h-3zM1231 785h3v3h-3zM1047 516h3v3h-3zM1107 664h3v3h-3zM1114 544h3v3h-3zM1111 582h3v3h-3zM1105 601h3v3h-3zM1057 437h3v3h-3zM1094 507h3v3h-3zM1210 668h3v3h-3zM1139 597h3v3h-3zM1058 450h3v3h-3zM1059 504h3v3h-3zM1063 528h3v3h-3zM1144 634h3v3h-3zM1066 600h3v3h-3zM1146 711h3v3h-3zM1134 705h3v3h-3zM1171 601h3v3h-3zM1095 465h3v3h-3zM1109 608h3v3h-3zM1239 741h3v3h-3zM1211 765h3v3h-3zM1045 435h3v3h-3zM1228 719h3v3h-3zM1235 710h3v3h-3zM1106 634h3v3h-3zM1200 770h3v3h-3zM1078 615h3v3h-3zM1179 646h3v3h-3zM1055 465h3v3h-3zM1238 766h3v3h-3zM1103 646h3v3h-3zM1131 615h3v3h-3zM1170 594h3v3h-3zM1171 659h3v3h-3zM1096 497h3v3h-3zM1151 663h3v3h-3zM1170 695h3v3h-3zM1130 559h3v3h-3zM1263 782h3v3h-3zM1082 591h3v3h-3zM1082 528h3v3h-3zM1170 735h3v3h-3zM1097 561h3v3h-3zM1263 544h3v3h-3zM1237 483h3v3h-3zM1199 636h3v3h-3zM1199 512h3v3h-3zM1248 565h3v3h-3zM1238 582h3v3h-3zM1156 551h3v3h-3zM1386 620h3v3h-3zM1346 595h3v3h-3zM1366 631h3v3h-3zM1129 499h3v3h-3zM1130 418h3v3h-3zM1223 637h3v3h-3zM1251 665h3v3h-3zM1114 451h3v3h-3zM1202 572h3v3h-3zM1293 703h3v3h-3zM1316 552h3v3h-3zM1277 740h3v3h-3zM1230 492h3v3h-3zM1187 445h3v3h-3zM1255 525h3v3h-3zM1286 522h3v3h-3zM1321 578h3v3h-3zM1134 467h3v3h-3zM1123 392h3v3h-3zM1224 687h3v3h-3zM1258 566h3v3h-3zM1110 366h3v3h-3zM1255 538h3v3h-3zM1269 583h3v3h-3zM1272 516h3v3h-3zM1288 578h3v3h-3zM1132 381h3v3h-3zM1261 577h3v3h-3zM1259 524h3v3h-3zM1129 469h3v3h-3zM1290 724h3v3h-3zM1157 474h3v3h-3zM1203 524h3v3h-3zM1268 667h3v3h-3zM1315 691h3v3h-3zM1203 532h3v3h-3zM1241 564h3v3h-3zM1376 631h3v3h-3zM1094 448h3v3h-3zM1251 649h3v3h-3zM1300 585h3v3h-3zM1266 711h3v3h-3zM1211 540h3v3h-3zM1097 447h3v3h-3zM1230 659h3v3h-3zM1259 625h3v3h-3zM1180 502h3v3h-3zM1163 495h3v3h-3zM1173 480h3v3h-3zM1194 549h3v3h-3zM1342 613h3v3h-3zM1203 455h3v3h-3zM1167 442h3v3h-3zM1233 630h3v3h-3zM1219 639h3v3h-3zM1152 416h3v3h-3zM1146 386h3v3h-3zM1072 397h3v3h-3zM1218 466h3v3h-3zM1322 558h3v3h-3zM1229 500h3v3h-3zM1237 657h3v3h-3zM1257 545h3v3h-3zM1201 634h3v3h-3zM1214 461h3v3h-3zM1320 564h3v3h-3zM1147 508h3v3h-3zM1198 604h3v3h-3zM1189 622h3v3h-3zM1196 567h3v3h-3zM1260 658h3v3h-3zM1181 509h3v3h-3zM1210 455h3v3h-3zM1241 657h3v3h-3zM1277 744h3v3h-3zM1262 551h3v3h-3zM1225 517h3v3h-3zM1108 422h3v3h-3zM1076 462h3v3h-3zM1073 464h3v3h-3zM1077 463h3v3h-3zM1073 463h3v3h-3zM1081 462h3v3h-3zM1078 460h3v3h-3zM1076 461h3v3h-3zM1077 461h3v3h-3zM1100 504h3v3h-3zM1097 506h3v3h-3zM1104 504h3v3h-3zM1100 509h3v3h-3zM1090 540h3v3h-3zM1092 543h3v3h-3zM1089 546h3v3h-3zM1092 543h3v3h-3zM1110 508h3v3h-3zM1115 508h3v3h-3zM1116 504h3v3h-3zM1140 602h3v3h-3zM1146 599h3v3h-3zM1142 603h3v3h-3zM1145 602h3v3h-3zM1139 599h3v3h-3zM1146 603h3v3h-3zM1137 598h3v3h-3zM1141 599h3v3h-3zM1143 601h3v3h-3zM1147 600h3v3h-3zM1144 602h3v3h-3zM1150 599h3v3h-3zM1147 611h3v3h-3zM1151 612h3v3h-3zM1148 606h3v3h-3zM1149 607h3v3h-3zM1145 609h3v3h-3zM1145 600h3v3h-3zM1149 604h3v3h-3zM1150 604h3v3h-3zM1132 576h3v3h-3zM1132 583h3v3h-3zM1145 587h3v3h-3zM1134 589h3v3h-3zM1138 577h3v3h-3zM1130 578h3v3h-3zM1180 596h3v3h-3zM1180 592h3v3h-3zM1177 597h3v3h-3zM1189 589h3v3h-3zM1193 590h3v3h-3zM1182 608h3v3h-3zM1188 596h3v3h-3zM1171 597h3v3h-3zM1182 594h3v3h-3zM1192 592h3v3h-3zM1196 596h3v3h-3zM1185 594h3v3h-3zM1185 605h3v3h-3zM1186 589h3v3h-3zM1179 604h3v3h-3zM1188 590h3v3h-3zM1183 597h3v3h-3zM1188 589h3v3h-3zM1185 587h3v3h-3zM1179 594h3v3h-3zM1193 595h3v3h-3zM1196 599h3v3h-3zM1212 450h3v3h-3zM1205 445h3v3h-3zM1208 454h3v3h-3zM1209 449h3v3h-3zM1211 449h3v3h-3zM1208 450h3v3h-3zM1229 466h3v3h-3zM1223 477h3v3h-3zM1223 465h3v3h-3zM1226 468h3v3h-3zM1228 477h3v3h-3zM1234 469h3v3h-3zM1228 474h3v3h-3zM1149 474h3v3h-3zM1146 475h3v3h-3zM1149 470h3v3h-3zM1150 480h3v3h-3zM1150 472h3v3h-3zM1185 520h3v3h-3zM1182 522h3v3h-3zM1184 523h3v3h-3zM1275 587h3v3h-3zM1279 590h3v3h-3zM1273 590h3v3h-3zM1272 586h3v3h-3zM1278 590h3v3h-3zM1281 585h3v3h-3zM1281 591h3v3h-3zM1279 589h3v3h-3zM1229 604h3v3h-3zM1236 598h3v3h-3zM1236 594h3v3h-3zM1229 596h3v3h-3zM1233 596h3v3h-3zM1227 591h3v3h-3zM1154 694h3v3h-3zM1161 682h3v3h-3zM1168 687h3v3h-3zM1157 688h3v3h-3zM1159 687h3v3h-3zM1159 693h3v3h-3zM1164 686h3v3h-3zM1158 685h3v3h-3zM1157 689h3v3h-3zM1157 692h3v3h-3zM1135 641h3v3h-3zM1142 638h3v3h-3zM1138 641h3v3h-3zM1138 638h3v3h-3zM1140 629h3v3h-3zM1142 640h3v3h-3zM1192 737h3v3h-3zM1187 746h3v3h-3zM1192 741h3v3h-3zM1187 752h3v3h-3zM1190 750h3v3h-3zM1182 746h3v3h-3zM1186 742h3v3h-3zM1195 739h3v3h-3zM1243 725h3v3h-3zM1248 729h3v3h-3zM1252 736h3v3h-3zM1252 740h3v3h-3zM1255 732h3v3h-3zM1248 737h3v3h-3zM1247 735h3v3h-3zM1249 726h3v3h-3zM1253 733h3v3h-3zM1251 736h3v3h-3zM1290 645h3v3h-3zM1290 660h3v3h-3zM1283 638h3v3h-3zM1289 643h3v3h-3zM1297 650h3v3h-3zM1283 649h3v3h-3zM1283 652h3v3h-3zM1295 656h3v3h-3zM1295 649h3v3h-3zM1296 652h3v3h-3zM1311 607h3v3h-3zM1314 596h3v3h-3zM1310 594h3v3h-3zM1306 592h3v3h-3zM1314 592h3v3h-3zM1317 604h3v3h-3zM1317 602h3v3h-3zM1326 595h3v3h-3zM1328 599h3v3h-3zM1319 601h3v3h-3zM1367 595h3v3h-3zM1378 597h3v3h-3zM1361 605h3v3h-3zM1369 605h3v3h-3zM1372 597h3v3h-3zM1371 592h3v3h-3zM1376 605h3v3h-3zM1378 594h3v3h-3zM1375 602h3v3h-3zM1375 591h3v3h-3zM1381 593h3v3h-3zM1370 598h3v3h-3zM1374 594h3v3h-3zM1368 591h3v3h-3zM1392 566h3v3h-3zM1388 579h3v3h-3zM1383 591h3v3h-3zM1327 525h3v3h-3z"/><path fill="#300c10" d="M1345 766h3v3h-3zM1364 719h3v3h-3zM1358 705h3v3h-3zM1338 779h3v3h-3zM1341 744h3v3h-3zM1390 650h3v3h-3zM1345 787h3v3h-3zM1374 702h3v3h-3zM1373 654h3v3h-3zM1365 737h3v3h-3zM1373 679h3v3h-3zM1350 735h3v3h-3zM1373 673h3v3h-3zM1376 650h3v3h-3zM1352 745h3v3h-3zM1377 697h3v3h-3zM1363 744h3v3h-3zM1371 703h3v3h-3zM1365 722h3v3h-3zM1378 663h3v3h-3zM1369 712h3v3h-3zM1387 651h3v3h-3zM1377 649h3v3h-3zM1355 763h3v3h-3zM1350 719h3v3h-3zM1339 749h3v3h-3zM1363 696h3v3h-3zM1392 640h3v3h-3zM1370 707h3v3h-3zM1354 739h3v3h-3zM1381 656h3v3h-3zM1378 651h3v3h-3zM1360 724h3v3h-3zM1369 687h3v3h-3zM1384 664h3v3h-3zM1341 745h3v3h-3zM1383 650h3v3h-3zM1363 714h3v3h-3zM1354 749h3v3h-3zM1386 660h3v3h-3zM1358 747h3v3h-3zM1354 777h3v3h-3zM1372 695h3v3h-3zM1373 685h3v3h-3zM1384 671h3v3h-3zM1360 753h3v3h-3zM1369 669h3v3h-3zM1352 770h3v3h-3zM1386 644h3v3h-3zM1390 642h3v3h-3zM1358 687h3v3h-3zM1368 707h3v3h-3zM1337 773h3v3h-3zM1359 684h3v3h-3zM1348 770h3v3h-3zM1384 647h3v3h-3zM1382 651h3v3h-3zM1364 736h3v3h-3zM1355 768h3v3h-3zM1351 758h3v3h-3zM1361 754h3v3h-3zM1353 696h3v3h-3zM1375 689h3v3h-3zM1342 745h3v3h-3zM1369 713h3v3h-3zM1357 667h3v3h-3zM1372 696h3v3h-3zM1361 731h3v3h-3zM1347 763h3v3h-3zM1358 692h3v3h-3zM1383 701h3v3h-3zM1362 774h3v3h-3zM1368 758h3v3h-3zM1389 687h3v3h-3zM1384 682h3v3h-3zM1366 752h3v3h-3zM1369 745h3v3h-3zM1386 691h3v3h-3zM1379 733h3v3h-3zM1397 655h3v3h-3zM1371 729h3v3h-3zM1376 707h3v3h-3zM1365 768h3v3h-3zM1387 679h3v3h-3zM1384 672h3v3h-3zM1390 653h3v3h-3zM1363 771h3v3h-3zM1377 757h3v3h-3zM1372 767h3v3h-3zM1397 681h3v3h-3zM1355 778h3v3h-3zM1377 736h3v3h-3zM1398 653h3v3h-3zM1386 688h3v3h-3zM1368 736h3v3h-3zM1375 733h3v3h-3zM1391 670h3v3h-3zM1402 656h3v3h-3zM1374 707h3v3h-3zM1367 758h3v3h-3zM1365 758h3v3h-3zM1389 683h3v3h-3zM1380 739h3v3h-3zM1406 645h3v3h-3zM1375 693h3v3h-3zM1383 679h3v3h-3zM1373 743h3v3h-3zM1384 712h3v3h-3zM1392 681h3v3h-3zM1387 682h3v3h-3zM1389 650h3v3h-3zM1408 660h3v3h-3zM1370 756h3v3h-3zM1374 739h3v3h-3zM1383 716h3v3h-3zM1399 642h3v3h-3zM1395 656h3v3h-3zM1397 658h3v3h-3zM1387 671h3v3h-3zM1388 649h3v3h-3zM1354 785h3v3h-3zM1362 776h3v3h-3zM1363 770h3v3h-3zM1395 640h3v3h-3zM1357 782h3v3h-3zM1362 777h3v3h-3zM1374 750h3v3h-3zM1354 777h3v3h-3zM1377 755h3v3h-3zM1370 757h3v3h-3zM1382 726h3v3h-3zM1365 779h3v3h-3zM1382 706h3v3h-3zM1367 770h3v3h-3zM1368 780h3v3h-3zM1369 752h3v3h-3zM1359 768h3v3h-3zM1394 639h3v3h-3zM1369 767h3v3h-3zM1400 641h3v3h-3zM1427 536h3v3h-3zM1426 542h3v3h-3zM1426 556h3v3h-3zM1426 565h3v3h-3zM1398 641h3v3h-3zM1405 644h3v3h-3zM1395 663h3v3h-3zM1392 670h3v3h-3zM1404 678h3v3h-3zM1390 694h3v3h-3zM1439 452h3v3h-3zM1550 585h3v3h-3zM1556 578h3v3h-3zM1559 621h3v3h-3zM1562 624h3v3h-3zM1565 621h3v3h-3zM1568 625h3v3h-3zM1357 787h3v3h-3zM1361 769h3v3h-3zM1366 782h3v3h-3zM1366 770h3v3h-3zM1361 789h3v3h-3zM1366 775h3v3h-3zM1365 779h3v3h-3zM1370 765h3v3h-3zM1363 780h3v3h-3zM1360 782h3v3h-3zM1365 766h3v3h-3zM1361 789h3v3h-3zM1358 788h3v3h-3zM1359 782h3v3h-3zM1371 764h3v3h-3zM1364 769h3v3h-3zM1363 772h3v3h-3zM1361 772h3v3h-3zM1368 764h3v3h-3zM1369 765h3v3h-3zM1368 772h3v3h-3zM1367 775h3v3h-3zM1361 776h3v3h-3zM1371 761h3v3h-3zM1363 776h3v3h-3zM1364 773h3v3h-3z"/><path fill="#10102e" d="M1641 683h3v3h-3zM1634 766h3v3h-3zM1212 416h3v3h-3zM1552 578h3v3h-3zM1130 345h3v3h-3zM1133 349h3v3h-3zM1129 351h3v3h-3zM1132 354h3v3h-3zM1366 795h3v3h-3zM1366 797h3v3h-3zM1370 802h3v3h-3zM1375 807h3v3h-3zM1381 812h3v3h-3zM1380 811h3v3h-3zM1387 817h3v3h-3zM1397 823h3v3h-3zM1405 823h3v3h-3zM1411 825h3v3h-3zM1412 831h3v3h-3zM1412 838h3v3h-3zM1414 847h3v3h-3zM1408 845h3v3h-3zM1396 836h3v3h-3zM1355 875h3v3h-3zM1356 872h3v3h-3zM1351 867h3v3h-3zM1354 873h3v3h-3zM1349 873h3v3h-3zM1327 846h3v3h-3zM1345 866h3v3h-3zM1328 845h3v3h-3zM1357 871h3v3h-3zM1358 879h3v3h-3zM1342 863h3v3h-3zM1362 873h3v3h-3zM1331 848h3v3h-3zM1359 870h3v3h-3zM1319 843h3v3h-3zM1355 878h3v3h-3zM1361 877h3v3h-3zM1338 848h3v3h-3zM1327 838h3v3h-3zM1361 868h3v3h-3zM1324 839h3v3h-3zM1329 844h3v3h-3zM1319 842h3v3h-3zM1326 836h3v3h-3zM1355 874h3v3h-3zM1357 873h3v3h-3zM1333 856h3v3h-3zM1354 869h3v3h-3zM1343 856h3v3h-3zM1343 852h3v3h-3zM1350 867h3v3h-3zM1344 849h3v3h-3zM1351 865h3v3h-3zM1329 846h3v3h-3zM1426 845h3v3h-3zM1430 852h3v3h-3zM1439 848h3v3h-3zM1441 853h3v3h-3zM1447 856h3v3h-3zM1448 861h3v3h-3zM1427 863h3v3h-3zM1431 862h3v3h-3zM1437 867h3v3h-3zM1450 880h3v3h-3zM1454 881h3v3h-3zM1376 895h3v3h-3zM1384 901h3v3h-3z"/><path fill="#22d0e6" d="M1421 494h3v3h-3zM1415 499h3v3h-3zM1421 500h3v3h-3zM1392 501h3v3h-3zM1396 504h3v3h-3zM1427 493h3v3h-3zM1383 502h3v3h-3zM1406 500h3v3h-3zM1417 503h3v3h-3zM1414 503h3v3h-3zM1402 501h3v3h-3zM1422 498h3v3h-3zM1431 498h3v3h-3zM1394 505h3v3h-3zM1430 500h3v3h-3zM1427 500h3v3h-3zM1409 498h3v3h-3zM1398 503h3v3h-3zM1426 501h3v3h-3zM1412 505h3v3h-3zM1411 500h3v3h-3zM1413 496h3v3h-3zM1426 501h3v3h-3zM1392 506h3v3h-3zM1401 500h3v3h-3zM1421 497h3v3h-3zM1350 479h3v3h-3zM1327 490h3v3h-3zM1326 465h3v3h-3zM1338 479h3v3h-3zM1312 471h3v3h-3zM1345 485h3v3h-3zM1351 496h3v3h-3zM1344 487h3v3h-3zM1353 478h3v3h-3zM1329 467h3v3h-3zM1320 470h3v3h-3zM1328 463h3v3h-3zM1341 489h3v3h-3zM1348 506h3v3h-3zM1314 482h3v3h-3zM1346 489h3v3h-3zM1345 481h3v3h-3zM1325 477h3v3h-3zM1356 485h3v3h-3zM1337 470h3v3h-3zM1333 481h3v3h-3zM1317 462h3v3h-3zM1318 455h3v3h-3zM1337 484h3v3h-3zM1345 475h3v3h-3zM1340 486h3v3h-3zM1368 503h3v3h-3zM1360 476h3v3h-3zM1340 487h3v3h-3zM1346 483h3v3h-3zM1327 472h3v3h-3zM1337 490h3v3h-3zM1331 471h3v3h-3zM1329 479h3v3h-3zM1333 478h3v3h-3zM1334 472h3v3h-3zM1328 484h3v3h-3zM1330 478h3v3h-3zM1331 479h3v3h-3zM1373 507h3v3h-3zM1338 482h3v3h-3zM1351 484h3v3h-3zM1334 476h3v3h-3zM1351 487h3v3h-3zM1342 474h3v3h-3zM1339 470h3v3h-3zM1328 469h3v3h-3zM1336 485h3v3h-3zM1334 476h3v3h-3zM1350 486h3v3h-3zM1337 487h3v3h-3zM1332 466h3v3h-3zM1327 480h3v3h-3zM1341 492h3v3h-3zM1348 488h3v3h-3zM1308 464h3v3h-3zM1339 470h3v3h-3zM1347 474h3v3h-3zM1365 485h3v3h-3zM1332 486h3v3h-3zM1343 480h3v3h-3zM1320 452h3v3h-3zM1335 481h3v3h-3zM1323 468h3v3h-3zM1313 478h3v3h-3zM1348 500h3v3h-3zM1312 464h3v3h-3zM1352 503h3v3h-3zM1340 481h3v3h-3zM1353 486h3v3h-3zM1301 481h3v3h-3zM1299 491h3v3h-3zM1283 497h3v3h-3zM1299 491h3v3h-3zM1302 480h3v3h-3zM1290 502h3v3h-3zM1290 492h3v3h-3zM1305 508h3v3h-3zM1292 507h3v3h-3zM1295 487h3v3h-3zM1285 503h3v3h-3zM1290 499h3v3h-3zM1292 496h3v3h-3zM1311 494h3v3h-3zM1280 499h3v3h-3zM1286 497h3v3h-3zM1306 479h3v3h-3zM1287 488h3v3h-3zM1315 486h3v3h-3zM1277 489h3v3h-3zM1287 475h3v3h-3zM1280 503h3v3h-3zM1292 493h3v3h-3zM1300 497h3v3h-3zM1274 504h3v3h-3zM1305 497h3v3h-3zM1288 507h3v3h-3zM1293 503h3v3h-3zM1281 486h3v3h-3zM1291 477h3v3h-3zM1280 483h3v3h-3zM1280 477h3v3h-3zM1296 496h3v3h-3zM1277 493h3v3h-3zM1356 482h3v3h-3zM1347 479h3v3h-3zM1354 458h3v3h-3zM1354 465h3v3h-3zM1368 452h3v3h-3zM1351 468h3v3h-3zM1368 458h3v3h-3zM1346 449h3v3h-3zM1358 459h3v3h-3zM1345 462h3v3h-3zM1357 468h3v3h-3zM1359 469h3v3h-3zM1353 468h3v3h-3zM1351 467h3v3h-3zM1346 476h3v3h-3zM1345 467h3v3h-3zM1275 493h3v3h-3zM1292 501h3v3h-3zM1266 488h3v3h-3zM1269 486h3v3h-3zM1281 486h3v3h-3zM1290 498h3v3h-3zM1275 492h3v3h-3zM1289 494h3v3h-3zM1282 485h3v3h-3zM1291 493h3v3h-3zM1286 493h3v3h-3zM1291 509h3v3h-3zM1354 451h3v3h-3zM1359 456h3v3h-3zM1353 461h3v3h-3zM1351 454h3v3h-3zM1354 460h3v3h-3zM1295 514h3v3h-3zM1350 508h3v3h-3zM1369 503h3v3h-3zM1352 508h3v3h-3zM1365 507h3v3h-3zM1302 514h3v3h-3zM1305 509h3v3h-3zM1310 510h3v3h-3zM1296 509h3v3h-3zM1335 510h3v3h-3zM1336 512h3v3h-3zM1295 512h3v3h-3zM1364 506h3v3h-3zM1362 506h3v3h-3zM1366 505h3v3h-3zM1314 508h3v3h-3zM1468 509h3v3h-3zM1454 516h3v3h-3zM1448 512h3v3h-3zM1484 512h3v3h-3zM1450 515h3v3h-3zM1458 517h3v3h-3zM1459 517h3v3h-3zM1479 510h3v3h-3zM1467 513h3v3h-3zM1448 518h3v3h-3zM1458 515h3v3h-3zM1446 518h3v3h-3zM1486 546h3v3h-3zM1446 545h3v3h-3zM1462 540h3v3h-3zM1450 532h3v3h-3zM1480 544h3v3h-3zM1475 547h3v3h-3zM1459 542h3v3h-3zM1454 545h3v3h-3zM1460 548h3v3h-3zM1454 538h3v3h-3zM1444 529h3v3h-3zM1450 528h3v3h-3zM1433 559h3v3h-3zM1442 563h3v3h-3zM1439 564h3v3h-3zM1440 564h3v3h-3zM1436 562h3v3h-3zM1447 562h3v3h-3zM1441 566h3v3h-3zM1446 560h3v3h-3zM1424 562h3v3h-3zM1449 559h3v3h-3zM1445 561h3v3h-3zM1445 565h3v3h-3zM1438 554h3v3h-3zM1445 555h3v3h-3zM1443 558h3v3h-3zM1439 561h3v3h-3zM1433 552h3v3h-3zM1452 569h3v3h-3zM1445 561h3v3h-3zM1432 555h3v3h-3zM1441 568h3v3h-3zM1442 565h3v3h-3zM1471 583h3v3h-3zM1472 581h3v3h-3zM1464 578h3v3h-3zM1460 566h3v3h-3zM1458 570h3v3h-3zM1464 578h3v3h-3zM1472 587h3v3h-3zM1463 573h3v3h-3zM1464 582h3v3h-3zM1459 574h3v3h-3zM1471 590h3v3h-3zM1475 590h3v3h-3zM1471 581h3v3h-3zM1473 589h3v3h-3zM1471 588h3v3h-3zM1456 565h3v3h-3zM1474 589h3v3h-3zM1467 582h3v3h-3zM1463 578h3v3h-3zM1468 578h3v3h-3zM1455 568h3v3h-3zM1461 576h3v3h-3zM1459 570h3v3h-3zM1454 573h3v3h-3zM1484 591h3v3h-3zM1483 588h3v3h-3zM1493 604h3v3h-3zM1494 603h3v3h-3zM1478 586h3v3h-3zM1494 602h3v3h-3zM1479 596h3v3h-3zM1475 586h3v3h-3zM1495 598h3v3h-3zM1478 588h3v3h-3zM1476 585h3v3h-3zM1481 589h3v3h-3zM1489 602h3v3h-3zM1495 601h3v3h-3zM1481 594h3v3h-3zM1480 593h3v3h-3zM1504 591h3v3h-3zM1511 591h3v3h-3zM1512 608h3v3h-3zM1533 623h3v3h-3zM1524 615h3v3h-3zM1529 622h3v3h-3zM1531 617h3v3h-3zM1551 636h3v3h-3zM1537 626h3v3h-3zM1543 629h3v3h-3zM1543 625h3v3h-3zM1524 618h3v3h-3zM1544 629h3v3h-3zM1532 624h3v3h-3zM1550 633h3v3h-3zM1529 620h3v3h-3zM1534 620h3v3h-3zM1538 619h3v3h-3zM1546 630h3v3h-3zM1521 610h3v3h-3zM1455 612h3v3h-3zM1491 659h3v3h-3zM1478 637h3v3h-3zM1433 623h3v3h-3zM1450 611h3v3h-3zM1453 626h3v3h-3zM1456 610h3v3h-3zM1436 657h3v3h-3zM1466 619h3v3h-3zM1458 626h3v3h-3zM1461 616h3v3h-3zM1479 656h3v3h-3zM1471 658h3v3h-3zM1484 635h3v3h-3zM1464 643h3v3h-3zM1453 610h3v3h-3zM1459 650h3v3h-3zM1474 608h3v3h-3zM1485 609h3v3h-3zM1463 616h3v3h-3zM1448 618h3v3h-3zM1470 644h3v3h-3zM1489 633h3v3h-3zM1431 608h3v3h-3zM1433 613h3v3h-3zM1439 622h3v3h-3zM1445 669h3v3h-3zM1453 671h3v3h-3zM1446 677h3v3h-3zM1434 697h3v3h-3zM1440 701h3v3h-3zM1453 711h3v3h-3zM1520 710h3v3h-3zM1539 722h3v3h-3zM1491 737h3v3h-3zM1568 750h3v3h-3zM1396 756h3v3h-3zM1455 758h3v3h-3zM1480 758h3v3h-3zM1415 602h3v3h-3zM1407 613h3v3h-3zM1400 635h3v3h-3zM1471 633h3v3h-3zM1412 773h3v3h-3zM1430 788h3v3h-3zM1456 789h3v3h-3zM1457 783h3v3h-3zM1508 782h3v3h-3zM1448 822h3v3h-3zM1462 833h3v3h-3zM1581 799h3v3h-3zM1604 785h3v3h-3zM1560 809h3v3h-3zM1423 879h3v3h-3zM1436 894h3v3h-3zM1444 883h3v3h-3zM1450 859h3v3h-3zM1427 870h3v3h-3zM1340 870h3v3h-3zM1365 844h3v3h-3zM1359 856h3v3h-3zM1345 850h3v3h-3zM1351 822h3v3h-3zM1353 843h3v3h-3zM1348 843h3v3h-3zM1343 834h3v3h-3zM1351 847h3v3h-3zM1333 889h3v3h-3zM1348 862h3v3h-3zM1338 857h3v3h-3zM1345 863h3v3h-3zM1367 851h3v3h-3zM1352 854h3v3h-3zM1346 850h3v3h-3zM1371 864h3v3h-3zM1367 851h3v3h-3zM1367 841h3v3h-3zM1359 845h3v3h-3zM1338 860h3v3h-3zM1364 859h3v3h-3zM1357 855h3v3h-3zM1346 848h3v3h-3zM1353 846h3v3h-3zM1348 829h3v3h-3zM1370 838h3v3h-3zM1355 865h3v3h-3zM1352 869h3v3h-3zM1359 859h3v3h-3zM1356 868h3v3h-3zM1363 847h3v3h-3zM1345 850h3v3h-3zM1358 837h3v3h-3zM1348 859h3v3h-3zM1355 846h3v3h-3zM1346 850h3v3h-3zM1346 858h3v3h-3zM1353 865h3v3h-3zM1342 867h3v3h-3zM1352 847h3v3h-3zM1346 855h3v3h-3zM1350 836h3v3h-3zM1349 870h3v3h-3zM1376 847h3v3h-3zM1350 854h3v3h-3zM1349 843h3v3h-3zM1335 852h3v3h-3zM1350 878h3v3h-3zM1358 860h3v3h-3zM1345 877h3v3h-3zM1344 877h3v3h-3zM1363 866h3v3h-3zM1352 856h3v3h-3zM1357 850h3v3h-3zM1377 832h3v3h-3zM1375 824h3v3h-3zM1367 836h3v3h-3zM1369 813h3v3h-3zM1377 819h3v3h-3zM1372 834h3v3h-3zM1396 821h3v3h-3zM1367 836h3v3h-3zM1376 827h3v3h-3zM1370 820h3v3h-3zM1390 826h3v3h-3zM1417 838h3v3h-3zM1376 826h3v3h-3zM1368 829h3v3h-3zM1353 817h3v3h-3zM1381 824h3v3h-3zM1370 832h3v3h-3zM1379 816h3v3h-3zM1374 831h3v3h-3zM1370 831h3v3h-3zM1388 830h3v3h-3zM1385 815h3v3h-3zM1388 884h3v3h-3zM1391 867h3v3h-3zM1389 886h3v3h-3zM1400 855h3v3h-3zM1377 892h3v3h-3zM1383 889h3v3h-3zM1393 878h3v3h-3zM1395 893h3v3h-3zM1394 875h3v3h-3zM1380 883h3v3h-3zM1418 864h3v3h-3zM1382 880h3v3h-3zM1411 877h3v3h-3zM1375 887h3v3h-3zM1394 886h3v3h-3zM1388 880h3v3h-3zM1382 882h3v3h-3zM1396 885h3v3h-3zM1365 795h3v3h-3zM1367 804h3v3h-3zM1366 802h3v3h-3zM1366 793h3v3h-3zM1374 796h3v3h-3zM1259 879h3v3h-3zM1254 880h3v3h-3zM1269 881h3v3h-3zM1256 869h3v3h-3zM1271 879h3v3h-3zM1257 902h3v3h-3zM1276 890h3v3h-3zM1252 901h3v3h-3zM1271 868h3v3h-3zM1258 901h3v3h-3zM1263 874h3v3h-3zM1277 876h3v3h-3zM1235 904h3v3h-3zM1243 904h3v3h-3zM1233 897h3v3h-3zM1235 904h3v3h-3zM1308 920h3v3h-3zM1300 935h3v3h-3zM1284 941h3v3h-3zM1291 927h3v3h-3zM1304 932h3v3h-3zM1299 919h3v3h-3zM1299 921h3v3h-3zM1304 938h3v3h-3zM1300 934h3v3h-3zM1229 978h3v3h-3zM1227 974h3v3h-3zM1221 979h3v3h-3zM1222 971h3v3h-3zM1310 851h3v3h-3zM1313 854h3v3h-3zM1324 863h3v3h-3zM783 896h3v3h-3zM782 893h3v3h-3zM778 893h3v3h-3zM781 893h3v3h-3zM777 920h3v3h-3zM782 920h3v3h-3zM776 919h3v3h-3zM776 918h3v3h-3zM826 996h3v3h-3zM829 994h3v3h-3zM830 1004h3v3h-3zM828 991h3v3h-3zM821 1005h3v3h-3zM997 939h3v3h-3zM993 953h3v3h-3zM996 937h3v3h-3zM985 935h3v3h-3zM993 942h3v3h-3zM993 937h3v3h-3zM992 940h3v3h-3zM989 948h3v3h-3zM983 971h3v3h-3zM981 969h3v3h-3zM973 979h3v3h-3zM972 981h3v3h-3zM983 972h3v3h-3zM1161 933h3v3h-3zM1165 932h3v3h-3zM1157 934h3v3h-3zM1156 934h3v3h-3zM1149 960h3v3h-3zM1157 965h3v3h-3zM1145 964h3v3h-3zM1160 960h3v3h-3zM1152 964h3v3h-3zM1155 960h3v3h-3zM1149 957h3v3h-3zM1153 959h3v3h-3zM1156 956h3v3h-3zM1156 957h3v3h-3zM1227 978h3v3h-3zM1221 973h3v3h-3zM1219 973h3v3h-3zM1229 978h3v3h-3zM1216 972h3v3h-3zM720 737h3v3h-3zM720 743h3v3h-3zM726 733h3v3h-3zM729 737h3v3h-3zM718 733h3v3h-3zM744 793h3v3h-3zM745 794h3v3h-3zM745 793h3v3h-3zM741 792h3v3h-3zM951 1002h3v3h-3zM946 991h3v3h-3zM950 996h3v3h-3zM949 996h3v3h-3zM948 993h3v3h-3zM955 983h3v3h-3zM951 984h3v3h-3zM946 1001h3v3h-3zM951 994h3v3h-3zM955 992h3v3h-3zM950 997h3v3h-3zM950 1006h3v3h-3zM951 1005h3v3h-3zM947 999h3v3h-3zM956 988h3v3h-3zM949 997h3v3h-3zM1102 901h3v3h-3zM1107 881h3v3h-3zM1086 908h3v3h-3zM1090 931h3v3h-3zM1098 903h3v3h-3zM1095 915h3v3h-3zM1104 878h3v3h-3zM1094 904h3v3h-3zM1090 914h3v3h-3zM1076 940h3v3h-3zM1101 912h3v3h-3zM1099 898h3v3h-3zM1099 905h3v3h-3zM1104 881h3v3h-3zM1086 946h3v3h-3zM1100 890h3v3h-3zM1097 919h3v3h-3zM1094 909h3v3h-3zM1084 947h3v3h-3zM1084 945h3v3h-3zM1092 907h3v3h-3zM1079 941h3v3h-3zM1101 905h3v3h-3zM1102 901h3v3h-3zM1095 924h3v3h-3zM1093 915h3v3h-3zM1095 912h3v3h-3zM1089 928h3v3h-3zM822 919h3v3h-3zM870 910h3v3h-3zM736 962h3v3h-3zM746 986h3v3h-3zM817 954h3v3h-3zM867 947h3v3h-3zM877 952h3v3h-3zM874 976h3v3h-3zM852 981h3v3h-3zM855 992h3v3h-3zM1016 944h3v3h-3zM1031 947h3v3h-3zM915 1008h3v3h-3zM1106 957h3v3h-3zM1110 957h3v3h-3zM1150 947h3v3h-3zM1153 947h3v3h-3zM1171 899h3v3h-3zM1163 922h3v3h-3zM1177 924h3v3h-3zM1067 1005h3v3h-3zM1235 898h3v3h-3zM1237 906h3v3h-3zM774 730h3v3h-3zM777 732h3v3h-3zM869 804h3v3h-3zM894 817h3v3h-3zM900 811h3v3h-3zM816 731h3v3h-3zM824 744h3v3h-3zM830 752h3v3h-3zM726 669h3v3h-3zM737 676h3v3h-3zM924 717h3v3h-3z"/><path fill="#20c070" d="M1589 623h3v3h-3zM1597 620h3v3h-3zM1619 631h3v3h-3zM1614 667h3v3h-3zM1652 687h3v3h-3zM1660 682h3v3h-3zM1684 707h3v3h-3zM1688 709h3v3h-3zM1691 710h3v3h-3z"/></svg><div class="t16" style="left:29px;top:26px;color:#0000be">Done! You may tune the parameters to reproduce the result.</div><div class="t16" style="left:29px;top:56px;color:#0000be">To see where the faces originate, check &#x27;Per-face Color&#x27; in the rendering panel.</div><div class="t16" style="left:29px;top:106px;">Mouse Operations:</div><div class="t16" style="left:29px;top:136px;">  - Orbit: left button</div><div class="t16" style="left:29px;top:166px;">  - Pan:   right button</div><div class="t16" style="left:29px;top:196px;">  - Zoom:  wheel</div><svg class="a" style="left:0;top:794px" width="120" height="130" viewBox="306 880 120 130"><defs><radialGradient id="rs" cx=".35" cy=".6" r=".7"><stop offset="0" stop-color="#ff1010"/><stop offset=".6" stop-color="#e00000"/><stop offset="1" stop-color="#500000"/></radialGradient></defs><line x1="381.2" y1="934.3" x2="385" y2="985" stroke="#00d000" stroke-width="3"/><line x1="382.4" y1="934.3" x2="386.2" y2="985" stroke="#009000" stroke-width="1"/><path d="M379.5 983.5 L391 982 L386 993.5 Z" fill="#00c000"/><path d="M385 988 L391 982 L386 993.5 Z" fill="#007000"/><line x1="381.2" y1="934.3" x2="332" y2="947.2" stroke="#0000ff" stroke-width="3"/><line x1="381.2" y1="935.5" x2="332" y2="948.4" stroke="#0000a0" stroke-width="1"/><path d="M318.5 949.3 L330.5 942.3 L332.5 952 Z" fill="#0000f0"/><path d="M318.5 949.3 L332.5 952 L331.5 948 Z" fill="#000090"/><circle cx="361.3" cy="910.8" r="5.4" fill="url(#rs)"/><line x1="381.2" y1="934.3" x2="361.5" y2="911" stroke="#d00000" stroke-width="3.2"/><line x1="382.2" y1="933.6" x2="363" y2="910" stroke="#700000" stroke-width="1"/><text x="356" y="906.5" font-family="Liberation Serif, serif" font-size="10" fill="#000">X</text><text x="386" y="993" font-family="Liberation Serif, serif" font-size="10" fill="#000">Y</text><text x="317" y="948.5" font-family="Liberation Serif, serif" font-size="10" fill="#000">Z</text></svg></div><div class="a" style="left:0px;top:1010px;width:1920px;height:31px;background:#f0f0f0;"></div><div class="sbp" style="left:0px;width:304px"></div><div class="ui" style="left:2.5px;top:1017.5px;font-size:12.3px;letter-spacing:.38px">Ready</div><div class="sbp" style="left:306px;width:424px"></div><div class="ui" style="left:308.5px;top:1017.5px;font-size:12.3px;letter-spacing:.38px">XYZ = [-, -, -]</div><div class="a" style="left:719px;top:1013px;width:1px;height:25px;background:#a0a0a0;"></div><div class="a" style="left:720px;top:1013px;width:1px;height:25px;background:#fff;"></div><div class="sbp" style="left:731px;width:11px"></div><div class="sbp" style="left:743px;width:254px"></div><div class="ui" style="left:745.5px;top:1017.5px;font-size:12.3px;letter-spacing:.38px">#points: 8208</div><div class="sbp" style="left:999px;width:254px"></div><div class="ui" style="left:1001.5px;top:1017.5px;font-size:12.3px;letter-spacing:.38px">#faces(candidates): 2119</div><div class="sbp" style="left:1255px;width:254px"></div><div class="ui" style="left:1257.5px;top:1017.5px;font-size:12.3px;letter-spacing:.38px">#faces(final): 28</div><div class="sbp" style="left:1511px;width:409px"></div><div class="a" style="left:0px;top:1040px;width:1920px;height:1px;background:#1f2a30;"></div><div class="a" style="left:47px;top:1040px;width:345px;height:1px;background:#cfcfcf;"></div><div class="a" style="left:690px;top:1040px;width:45px;height:1px;background:#a05a28;"></div></div></body></html>
